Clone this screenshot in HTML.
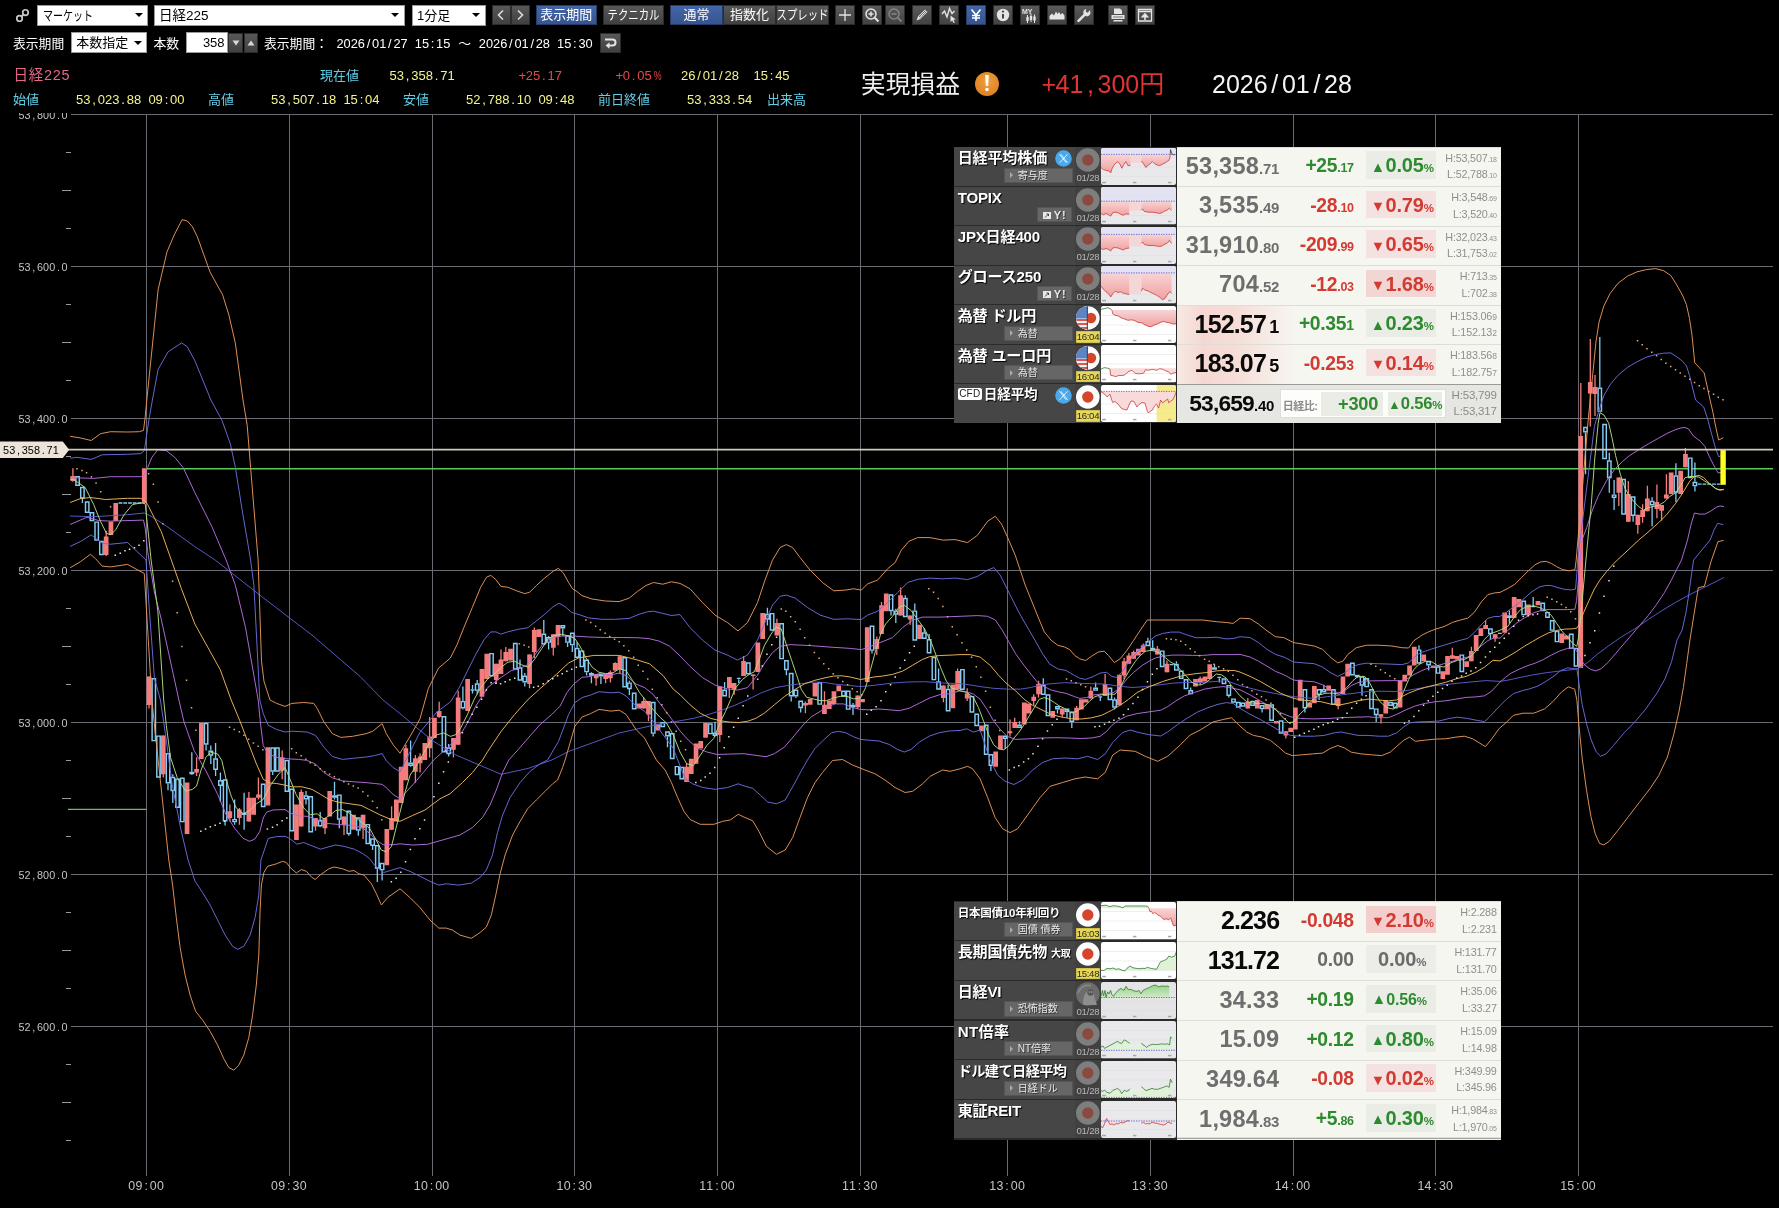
<!DOCTYPE html>
<html lang="ja"><head><meta charset="utf-8"><title>日経225 チャート</title>
<style>
html,body{margin:0;padding:0;background:#000;}
body{width:1779px;height:1208px;position:relative;overflow:hidden;font-family:"Liberation Sans","Noto Sans CJK JP",sans-serif;color:#fff;}
.abs{position:absolute;white-space:nowrap;}

.sel{position:absolute;background:#fff;border:1px solid #9a9a9a;box-sizing:border-box;color:#000;font-size:13px;line-height:19px;height:21px;padding-left:4.5px;white-space:nowrap;overflow:hidden;}
.sel i{position:absolute;right:4.5px;top:7.5px;width:0;height:0;border-left:4px solid transparent;border-right:4px solid transparent;border-top:4.5px solid #000;}
.btn{position:absolute;box-sizing:border-box;height:20px;top:5px;background:linear-gradient(#585858,#404040);border:1px solid #2c2c2c;color:#fff;font-size:13px;line-height:18px;text-align:center;white-space:nowrap;overflow:hidden;}
.btn.on{background:linear-gradient(#4466a8,#36548e);border-color:#263c68;}
.btn span{display:inline-block;}
.ib{position:absolute;box-sizing:border-box;width:20px;height:20px;top:5px;background:linear-gradient(#5a5a5a,#424242);border:1px solid #2c2c2c;}
.ib.on{background:linear-gradient(#4466a8,#36548e);border-color:#263c68;}
.ib svg{position:absolute;left:0;top:0;}
.nar{display:inline-block;transform:scaleX(.8);transform-origin:0 50%;}
.pp{display:inline-block;text-align:center;font-weight:normal;}
.t{position:absolute;white-space:nowrap;line-height:1;}
.cy{color:#62cce4;} .ye{color:#f4f48c;} .rd{color:#e84848;}


.pn{position:absolute;left:954.2px;width:546.8px;background:#2a2a2a;}
.row{position:absolute;left:0;width:546.5px;height:38.5px;}
.row .nm{position:absolute;left:0;top:0;width:121px;height:100%;background:#464646;}
.row .fl{position:absolute;left:121px;top:0;width:25.5px;height:100%;background:#414141;}
.row .mc{position:absolute;left:146.5px;top:0.6px;width:75.5px;height:37.3px;border-radius:2px;overflow:hidden;}
.row .lt{position:absolute;left:222.5px;top:-0.6px;width:324px;height:39.7px;background:#f6f6f1;border-top:1px solid #deded8;box-sizing:border-box;}
.row .lt.cfd{background:#e6e6e2;border-top:1.5px solid #9a9a96;}
.nmt{position:absolute;left:3.5px;top:2px;font-weight:bold;font-size:15.1px;line-height:18px;color:#fff;white-space:nowrap;text-shadow:1px 1px 1px #000;letter-spacing:-0.2px}
.sb{position:absolute;top:20.5px;height:15.3px;background:#666;border:1px solid #555;box-sizing:border-box;color:#e8e8e8;font-size:10px;line-height:14.4px;white-space:nowrap;text-shadow:1px 1px 0 #333;}
.sb:before{content:"";position:absolute;left:5px;top:3.6px;border-left:3.5px solid #aaa;border-top:3px solid transparent;border-bottom:3px solid transparent;}
.dt{position:absolute;left:0;width:25.5px;top:25px;text-align:center;font-size:9.6px;line-height:11px;color:#b8b8b8;letter-spacing:-0.2px}
.tm{position:absolute;left:1px;width:23.5px;top:26.3px;height:11.3px;background:#e6d65a;text-align:center;font-size:9.6px;line-height:11.6px;color:#2a2a1a;letter-spacing:-0.3px;box-shadow:inset 0 0 0 0.5px #b8a840}
.pr{position:absolute;right:221.5px;top:3.4px;font-weight:bold;font-size:23.5px;line-height:30px;color:#6e6e6e;white-space:nowrap;letter-spacing:0.2px}
.pr small{font-size:15px;letter-spacing:-0.2px}
.pr.lv{color:#0a0a0a;font-size:25px;letter-spacing:-0.85px}
.ch{position:absolute;right:147px;top:5.6px;font-weight:bold;font-size:19.3px;line-height:26px;white-space:nowrap;letter-spacing:-0.3px}
.ch small{font-size:12.5px}
.pc{position:absolute;left:189.5px;width:69.5px;top:3.6px;height:27.6px;box-sizing:border-box;font-weight:bold;font-size:20px;line-height:29.4px;text-align:right;padding-right:2px;white-space:nowrap;letter-spacing:-0.2px}
.pc small{font-size:11.5px}
.pc i{font-style:normal;font-size:14.5px;position:relative;top:-0.5px;margin-right:0.5px}
.up{color:#2e8a2e}.dn{color:#d23a32}.fl0{color:#6a6a6a}
.pc.up{background:#e9ede6}.pc.dn{background:#f3e2e0}.pc.fl0{background:#ecece8}
.hl{position:absolute;right:4px;top:3px;text-align:right;font-size:10.8px;line-height:15.8px;color:#8e8e8e;white-space:nowrap;letter-spacing:-0.2px}
.hl small{font-size:7px}
.glow{position:absolute;left:0;top:0;width:118px;height:100%;background:linear-gradient(90deg,rgba(246,186,180,.22) 0,rgba(246,186,180,.5) 22%,rgba(246,186,180,.42) 50%,rgba(246,186,180,0) 100%);}

</style></head><body><div id="root" style="position:absolute;left:0;top:0;width:1779px;height:1208px;will-change:transform">
<svg class="chart" width="1779" height="1095" viewBox="0 113 1779 1095" style="position:absolute;left:0;top:113px">
<path d="M70.5 114.6H1773M70.5 266.6H1773M70.5 418.6H1773M70.5 570.6H1773M70.5 722.5H1773M70.5 874.4H1773M70.5 1026.4H1773M146.8 114V1176M289.4 114V1176M432.1 114V1176M574.8 114V1176M717.5 114V1176M860.2 114V1176M1007.7 114V1176M1150.4 114V1176M1293.1 114V1176M1435.8 114V1176M1578.5 114V1176" stroke="#6a6a72" stroke-width="1" fill="none" shape-rendering="crispEdges"/>
<path d="M66 152.6H71M62 190.6H71M66 228.6H71M66 304.6H71M62 342.6H71M66 380.6H71M66 456.6H71M62 494.6H71M66 532.6H71M66 608.6H71M62 646.6H71M66 684.6H71M66 760.6H71M62 798.6H71M66 836.6H71M66 912.6H71M62 950.6H71M66 988.6H71M66 1064.6H71M62 1102.6H71M66 1140.6H71" stroke="#9a9a9a" stroke-width="1" fill="none" shape-rendering="crispEdges"/>
<g font-family="'Liberation Sans',sans-serif" fill="#c4c4c4">
<text x="21.5 27.6 33.8 39.9 46.1 52.2 58.4 64.5" y="118.7" font-size="10.8" text-anchor="middle">53,800.0</text>
<text x="21.5 27.6 33.8 39.9 46.1 52.2 58.4 64.5" y="270.7" font-size="10.8" text-anchor="middle">53,600.0</text>
<text x="21.5 27.6 33.8 39.9 46.1 52.2 58.4 64.5" y="422.7" font-size="10.8" text-anchor="middle">53,400.0</text>
<text x="21.5 27.6 33.8 39.9 46.1 52.2 58.4 64.5" y="574.7" font-size="10.8" text-anchor="middle">53,200.0</text>
<text x="21.5 27.6 33.8 39.9 46.1 52.2 58.4 64.5" y="726.6" font-size="10.8" text-anchor="middle">53,000.0</text>
<text x="21.5 27.6 33.8 39.9 46.1 52.2 58.4 64.5" y="878.5" font-size="10.8" text-anchor="middle">52,800.0</text>
<text x="21.5 27.6 33.8 39.9 46.1 52.2 58.4 64.5" y="1030.5" font-size="10.8" text-anchor="middle">52,600.0</text>
<text x="131.8 139 146.2 153.3 160.5" y="1190" font-size="12.4" text-anchor="middle">09:00</text>
<text x="274.5 281.7 288.8 296 303.1" y="1190" font-size="12.4" text-anchor="middle">09:30</text>
<text x="417.2 424.4 431.5 438.7 445.8" y="1190" font-size="12.4" text-anchor="middle">10:00</text>
<text x="559.9 567.1 574.2 581.4 588.5" y="1190" font-size="12.4" text-anchor="middle">10:30</text>
<text x="702.6 709.8 716.9 724.1 731.2" y="1190" font-size="12.4" text-anchor="middle">11:00</text>
<text x="845.4 852.5 859.6 866.8 873.9" y="1190" font-size="12.4" text-anchor="middle">11:30</text>
<text x="992.8 1000 1007.1 1014.2 1021.4" y="1190" font-size="12.4" text-anchor="middle">13:00</text>
<text x="1135.5 1142.7 1149.8 1157 1164.1" y="1190" font-size="12.4" text-anchor="middle">13:30</text>
<text x="1278.2 1285.3 1292.5 1299.7 1306.8" y="1190" font-size="12.4" text-anchor="middle">14:00</text>
<text x="1420.9 1428 1435.2 1442.4 1449.5" y="1190" font-size="12.4" text-anchor="middle">14:30</text>
<text x="1563.6 1570.8 1577.9 1585.1 1592.2" y="1190" font-size="12.4" text-anchor="middle">15:00</text>
</g>
<path d="M68 809.3H146.5" stroke="#58c858" stroke-width="1.2"/>
<path d="M146.7 468.7H1773" stroke="#58c858" stroke-width="1.4"/>
<path d="M72.9 468.3V481.8M106.2 530.7V556M149 676.4V708.4M163.3 735.4V777.6M196.6 757.3V775.9M229.9 804.6V821.4M239.4 807.9V824.8M248.9 791.9V821.4M258.4 777.6V799.5M282.2 750.6V779.3M301.2 789.4V826.5M315.5 818V830.7M325 818V834.1M344 816.4V834.9M363.1 814.7V839.1M391.6 806.2V829.8M405.9 744.8V780.2M415.4 754.9V782.7M420.1 753.2V772.6M429.6 717V757.4M439.2 701.8V717.8M453.4 738V757.4M458.2 690.8V744.8M496.2 663.8V684.1M501 649.5V674M505.8 647V661.3M529.5 654.6V688.3M534.3 627.6V657.9M553.3 634.3V655.4M558.1 625.1V645.3M596.1 674V685.8M605.6 674V683.2M610.4 670.6V682.4M615.2 662.2V670.6M619.9 655.4V674M643.7 697.6V708.5M648.5 700.9V721.2M686.5 763.3V781.9M719.8 686.2V741.9M729.3 677V698M734.1 682.9V694.7M743.6 655.9V676.1M753.1 674.4V689.6M776.9 618.8V635.6M805.4 701.4V713.2M824.5 691.3V714.1M857.7 695.5V709M876.8 636.5V655M881.5 601.9V634M900.6 587.6V615.4M910.1 615.4V624.7M943.4 685.4V702.3M957.6 668.5V689.6M967.2 688.3V700.9M1010 719.5V736.4M1014.7 717.8V727.9M1033.7 694.2V705.2M1038.5 680.7V697.6M1062.3 708.5V717M1076.6 706V720.3M1090.8 686.6V698.4M1105.1 674V695.9M1124.1 657.9V679M1128.9 652.9V663.8M1133.6 650.4V658.8M1143.2 643.6V652M1157.4 646.1V654.6M1166.9 660.5V672.3M1200.2 676.5V684.9M1247.8 698.3V708.4M1285.9 731.2V738.4M1338.2 698.3V709.2M1381 714.3V723.6M1452.3 647.7V658.7M1471.4 646.8V661.2M1485.6 619.9V629.1M1495.1 634.2V641.8M1580.8 383V668M1590.3 339V426.6M1595 375V416M1618.8 477.6V506M1628.3 481.1V521.7M1637.8 514.7V533.8M1642.6 504.3V522.8M1647.4 485.7V511.2M1656.9 484.6V518.2M1661.6 504.9V520.5M1666.4 474.2V498.5M1685.4 448.1V467.2" stroke="#f47c7c" stroke-width="1.3" fill="none"/>
<path d="M70.5 475.9h4.7V480.9h-4.7zM103.8 536.6h4.7V555.1h-4.7zM108.6 521.4h4.7V534.9h-4.7zM113.4 502.9h4.7V521.1h-4.7zM141.9 468.3h4.7V502.9h-4.7zM146.7 676.4h4.7V705h-4.7zM160.9 735.4h4.7V774.2h-4.7zM184.7 782.6h4.7V834.1h-4.7zM194.2 769.1h4.7V772.5h-4.7zM199 722.8h4.7V759h-4.7zM227.5 811.3h4.7V818h-4.7zM237 809.6h4.7V818h-4.7zM246.5 797.8h4.7V821.4h-4.7zM251.3 797.8h4.7V814.7h-4.7zM256.1 794.4h4.7V797.8h-4.7zM265.6 747.2h4.7V805.4h-4.7zM279.8 757.3h4.7V770.8h-4.7zM294.1 804.6h4.7V840h-4.7zM298.9 791.9h4.7V826.5h-4.7zM313.1 818h4.7V826.5h-4.7zM322.6 818h4.7V828.2h-4.7zM327.4 791.1h4.7V816.4h-4.7zM341.7 816.4h4.7V824.8h-4.7zM351.2 814.7h4.7V829.8h-4.7zM360.7 814.7h4.7V828.2h-4.7zM384.5 829h4.7V865.3h-4.7zM389.2 818h4.7V829.8h-4.7zM394 799.5h4.7V821.4h-4.7zM398.8 766.7h4.7V803h-4.7zM403.5 748.2h4.7V780.2h-4.7zM413 758.3h4.7V771.8h-4.7zM417.8 756.6h4.7V763.3h-4.7zM422.5 743.1h4.7V760h-4.7zM427.3 736.4h4.7V748.2h-4.7zM432.1 717.8h4.7V738h-4.7zM436.8 711.1h4.7V717h-4.7zM451.1 738h4.7V749.8h-4.7zM455.8 697.6h4.7V744.8h-4.7zM465.3 679h4.7V711.1h-4.7zM479.6 668.9h4.7V696.7h-4.7zM484.4 653.7h4.7V679h-4.7zM493.9 663.8h4.7V679.9h-4.7zM498.6 659.6h4.7V674h-4.7zM503.4 652h4.7V661.3h-4.7zM508.2 648.7h4.7V660.5h-4.7zM527.2 654.6h4.7V684.1h-4.7zM531.9 630.1h4.7V652h-4.7zM536.7 629.3h4.7V636.9h-4.7zM551 634.3h4.7V647.8h-4.7zM555.7 625.1h4.7V636.9h-4.7zM593.8 674h4.7V678.2h-4.7zM603.3 674h4.7V679h-4.7zM608 672.3h4.7V678.2h-4.7zM612.8 663h4.7V670.6h-4.7zM617.6 656.3h4.7V668.9h-4.7zM636.6 703.5h4.7V708.5h-4.7zM641.3 700.9h4.7V708.5h-4.7zM646.1 700.9h4.7V714.4h-4.7zM655.6 723.7h4.7V730.5h-4.7zM684.2 766.7h4.7V781.9h-4.7zM688.9 758.8h4.7V773.9h-4.7zM693.7 743.6h4.7V763.8h-4.7zM698.4 741h4.7V748.6h-4.7zM703.2 723h4.7V737.7h-4.7zM717.5 686.2h4.7V735.1h-4.7zM727 677h4.7V687.9h-4.7zM731.7 682.9h4.7V689.6h-4.7zM741.2 660.9h4.7V676.1h-4.7zM750.8 674.4h4.7V676.1h-4.7zM755.5 642.4h4.7V671.9h-4.7zM760.3 612.9h4.7V639h-4.7zM774.5 623h4.7V635.6h-4.7zM803.1 703.1h4.7V705.6h-4.7zM807.8 698.9h4.7V704.8h-4.7zM812.6 682.9h4.7V696.4h-4.7zM822.1 704.8h4.7V714.1h-4.7zM826.9 700.6h4.7V709h-4.7zM831.6 691.3h4.7V703.9h-4.7zM836.4 685.4h4.7V691.3h-4.7zM855.4 695.5h4.7V707.3h-4.7zM860.2 698.9h4.7V702.3h-4.7zM864.9 627.2h4.7V682h-4.7zM874.4 639h4.7V649.1h-4.7zM879.2 605.3h4.7V634h-4.7zM883.9 593.5h4.7V611.2h-4.7zM898.2 595.2h4.7V615.4h-4.7zM907.7 615.4h4.7V619.6h-4.7zM917.2 624.7h4.7V639h-4.7zM941 685.4h4.7V698h-4.7zM950.5 684.6h4.7V708.2h-4.7zM955.3 671.1h4.7V689.6h-4.7zM964.8 693.4h4.7V698.4h-4.7zM979.1 725.4h4.7V731.3h-4.7zM993.3 751.5h4.7V766.7h-4.7zM998.1 735.5h4.7V749h-4.7zM1007.6 731.3h4.7V733.3h-4.7zM1012.4 722h4.7V727.9h-4.7zM1021.9 702.6h4.7V724.6h-4.7zM1026.6 703.5h4.7V713.6h-4.7zM1031.4 696.7h4.7V700.9h-4.7zM1036.2 684.1h4.7V694.2h-4.7zM1050.4 711.1h4.7V717.8h-4.7zM1059.9 708.5h4.7V714.4h-4.7zM1074.2 707.7h4.7V720.3h-4.7zM1079 699.3h4.7V709.4h-4.7zM1083.7 699.3h4.7V702.6h-4.7zM1088.5 690.8h4.7V698.4h-4.7zM1102.7 684.1h4.7V695.9h-4.7zM1117 674.8h4.7V705.2h-4.7zM1121.8 661.3h4.7V675.6h-4.7zM1126.5 655.4h4.7V663.8h-4.7zM1131.3 652h4.7V658.8h-4.7zM1136 648.7h4.7V655.4h-4.7zM1140.8 645.3h4.7V652h-4.7zM1155.1 648.7h4.7V654.6h-4.7zM1164.6 663.8h4.7V672.3h-4.7zM1193.1 679h4.7V686.6h-4.7zM1197.9 678.2h4.7V682.4h-4.7zM1202.6 676.5h4.7V681.6h-4.7zM1207.4 664.2h4.7V679h-4.7zM1245.4 701.7h4.7V708.4h-4.7zM1255 700h4.7V708.4h-4.7zM1264.5 704.2h4.7V709.2h-4.7zM1274 721h4.7V723.6h-4.7zM1283.5 731.2h4.7V735.4h-4.7zM1288.3 727.8h4.7V732h-4.7zM1293 707.6h4.7V729.5h-4.7zM1297.8 679.7h4.7V700.8h-4.7zM1307.3 702.5h4.7V707.6h-4.7zM1312 686.1h4.7V703.3h-4.7zM1326.3 685.6h4.7V690.7h-4.7zM1335.8 698.3h4.7V705.9h-4.7zM1340.6 676.4h4.7V694.1h-4.7zM1345.3 663.7h4.7V676.4h-4.7zM1378.6 714.3h4.7V716.8h-4.7zM1383.4 700h4.7V713.5h-4.7zM1397.7 680.6h4.7V707.6h-4.7zM1402.4 674.7h4.7V681.4h-4.7zM1407.2 665.4h4.7V675.5h-4.7zM1411.9 646.8h4.7V665.4h-4.7zM1421.4 654.4h4.7V661.2h-4.7zM1431 665.4h4.7V667.9h-4.7zM1440.5 671.3h4.7V678.9h-4.7zM1445.2 656.1h4.7V674.7h-4.7zM1450 655.3h4.7V658.7h-4.7zM1454.7 656.1h4.7V659.5h-4.7zM1464.3 661.2h4.7V667.1h-4.7zM1469 651.1h4.7V661.2h-4.7zM1473.8 635h4.7V651.1h-4.7zM1478.5 628.3h4.7V635.9h-4.7zM1483.3 624.9h4.7V629.1h-4.7zM1492.8 634.2h4.7V638.4h-4.7zM1502.3 612.6h4.7V632.8h-4.7zM1511.8 597.1h4.7V618h-4.7zM1516.6 599.1h4.7V607.2h-4.7zM1526.1 604.5h4.7V615.3h-4.7zM1535.6 601.1h4.7V605.2h-4.7zM1559.4 633.5h4.7V643h-4.7zM1564.1 635.5h4.7V639.6h-4.7zM1578.4 436h4.7V668h-4.7zM1587.9 382h4.7V393.5h-4.7zM1592.7 387h4.7V394h-4.7zM1616.5 477.6h4.7V492.7h-4.7zM1626 493.9h4.7V521.7h-4.7zM1635.5 514.7h4.7V525.1h-4.7zM1640.3 510.1h4.7V517h-4.7zM1645 498.5h4.7V511.2h-4.7zM1654.5 502h4.7V508.9h-4.7zM1659.3 504.9h4.7V510.7h-4.7zM1664 494.4h4.7V498.5h-4.7zM1668.8 472.4h4.7V493.9h-4.7zM1678.3 470.7h4.7V493.9h-4.7zM1683.1 453.9h4.7V467.2h-4.7z" fill="#f47c7c"/>
<path d="M82.4 498.7V502.9M118.6 503H122.4M123.3 503H127.1M128.1 503H131.9M132.8 503H136.6M137.6 503H141.4M168 783.5V790.2M172.8 774.2V776.7M172.8 791.1V802.9M191.8 752.3V771.7M191.8 774.2V775M206.1 744.7V750.6M210.8 745.5V750.6M210.8 755.6V764.1M215.6 743V758.2M215.6 770V775.9M220.4 772.5V780.1M220.4 786V802M225.1 821.4V825.6M234.6 799.5V818.9M234.6 822.3V824.8M244.1 792.7V812.6M244.1 815V829.8M272.7 771.7V775M306 791.1V795.3M306 799.5V804.6M320.2 812.1V819.7M320.2 826.5V827.3M334.5 781.8V795.3M334.5 797.8V799.5M339.3 819.7V828.2M348.8 834.1V835.8M358.3 830.7V835.8M372.6 845.9V850.1M377.3 868.6V882.1M382.1 870.3V880.4M410.6 740.6V762.5M410.6 765.9V766.7M448.7 743.9V747.3M448.7 754.1V756.6M462.9 686.6V700.9M462.9 708.5V709.4M472.5 684.9V689.1M472.5 690.8V693.4M470.6 690H474.4M477.2 679.9V683.2M477.2 690.8V694.2M520 659.6V667.2M524.8 673.1V675.6M524.8 682.4V686.6M543.8 620V633.5M543.8 644.5V645.3M548.6 636V636.9M548.6 642.8V649.5M562.8 628.4V636M567.6 642.8V647M572.3 645.3V652M577.1 641.9V647.8M586.6 672.3V675.6M591.4 672.3V673.1M591.4 675.6V683.2M600.9 676.5V684.1M629.4 680.7V682.4M629.4 689.1V695M653.2 733.8V736.4M667.5 736.4V747.3M715 721.7V732.6M715 736V736.8M724.6 682V689.6M738.8 679.2V682.9M736.9 678.4H740.7M767.4 607.8V613.7M767.4 619.6V625.5M786.4 670.2V675.3M791.2 696.4V701.4M795.9 696.4V698M800.7 708.2V712.4M853 703.1V704.8M853 707.3V714.9M872 650.8V653.4M891 611.2V615.4M895.8 608.7V610.4M895.8 614.6V623M905.3 595.2V597.7M914.8 603.6V610.4M924.3 628.1V632.3M929.1 634V639M938.6 668.5V681.2M948.1 684.6V688.8M990.9 765.9V770.9M1005.2 738.9V749M1019.5 721.2V724.6M1043.3 678.2V684.9M1057.5 709.4V713.6M1067 711.9V717.8M1071.8 722V727.9M1095.6 682.4V687.5M1100.3 697.6V700.9M1098.4 696.8H1102.2M1114.6 697.6V699.3M1114.6 707.7V709.4M1147.9 637.7V641.1M1152.7 640.2V647.8M1169.8 664.6H1173.6M1176.4 661.3V663.8M1190.7 687.5V690M1214.5 664.2V667.2M1219.3 678.2V682.4M1217.4 677.4H1221.2M1228.8 695.9V697.6M1262.1 709.2V712.6M1304.9 708.4V712.6M1319.1 694.9V700M1323.9 684.8V689M1357.2 677.2V678M1362 685.6V695.8M1376.2 715.1V721.9M1419 645.2V649.4M1428.6 665.4V670.5M1490.4 634.2V639.3M1498 633.4H1501.8M1509.4 610.6V615.3M1509.4 618V623.4M1533.2 597.1V605.9M1531.3 606.5H1535.1M1585.5 432.4V474.2M1599.8 337V387.5M1609.3 452.7V460.3M1609.3 478.2V492.7M1614.1 480V494.4M1614.1 497.9V510.1M1633.1 515.9V521.7M1652.1 497.3V500.8M1652.1 505.4V526.3M1675.9 463.2V475.3M1675.9 492.7V502M1694.9 462.6V481.7M1694.9 486.3V491.5M1697.8 484.2H1701.6M1702.5 484.2H1706.3M1707.3 484.2H1711.1M1712.1 484.2H1715.9M1716.8 484.2H1720.6" stroke="#84ccf4" stroke-width="1.3" fill="none"/>
<path d="M75.9 476.6h3.4V485.3h-3.4zM80.7 487.5h3.4V498h-3.4zM85.5 501.9h3.4V512.3h-3.4zM90.2 512.8h3.4V520.4h-3.4zM95 522.1h3.4V540.1h-3.4zM99.7 541.5h3.4V554.4h-3.4zM152.1 678.7h3.4V740.6h-3.4zM156.8 736.1h3.4V776.9h-3.4zM166.3 753.8h3.4V782.8h-3.4zM171.1 777.4h3.4V790.4h-3.4zM175.8 779.1h3.4V807.2h-3.4zM180.6 778.3h3.4V821.6h-3.4zM190.1 772.4h3.4V773.5h-3.4zM204.4 723.5h3.4V744h-3.4zM209.1 751.3h3.4V754.9h-3.4zM213.9 758.9h3.4V769.3h-3.4zM218.7 780.8h3.4V785.3h-3.4zM223.4 780h3.4V820.7h-3.4zM232.9 819.6h3.4V821.6h-3.4zM242.4 813.3h3.4V814.3h-3.4zM261.5 784.2h3.4V806.4h-3.4zM271 747.9h3.4V771h-3.4zM275.7 747.9h3.4V771h-3.4zM285.2 760.6h3.4V791.2h-3.4zM290 789.2h3.4V830.8h-3.4zM304.3 796h3.4V798.8h-3.4zM309 796.8h3.4V831.7h-3.4zM318.5 820.4h3.4V825.8h-3.4zM332.8 796h3.4V797.1h-3.4zM337.6 795.1h3.4V819h-3.4zM347.1 811.2h3.4V833.4h-3.4zM356.6 817.9h3.4V830h-3.4zM366.1 824.6h3.4V843.5h-3.4zM370.9 839h3.4V845.2h-3.4zM375.6 845.7h3.4V867.9h-3.4zM380.4 863.4h3.4V869.6h-3.4zM408.9 763.2h3.4V765.2h-3.4zM442.2 716.8h3.4V751.7h-3.4zM447 748h3.4V753.4h-3.4zM461.2 701.6h3.4V707.8h-3.4zM475.5 683.9h3.4V690.1h-3.4zM489.8 653.6h3.4V675.8h-3.4zM513.6 643.5h3.4V669h-3.4zM518.3 667.9h3.4V680h-3.4zM523.1 676.3h3.4V681.7h-3.4zM542.1 634.2h3.4V643.8h-3.4zM546.9 637.6h3.4V642.1h-3.4zM561.1 625.8h3.4V627.7h-3.4zM565.9 635.9h3.4V642.1h-3.4zM570.6 633.3h3.4V644.6h-3.4zM575.4 648.5h3.4V657.2h-3.4zM580.2 651.1h3.4V666.5h-3.4zM584.9 660.3h3.4V671.6h-3.4zM589.7 673.8h3.4V674.9h-3.4zM599.2 674.7h3.4V675.8h-3.4zM623 657.8h3.4V686.8h-3.4zM627.7 683.1h3.4V688.4h-3.4zM632.5 693.2h3.4V708.7h-3.4zM651.5 702.5h3.4V733.1h-3.4zM661 722.7h3.4V726.4h-3.4zM665.8 732h3.4V735.7h-3.4zM670.5 733.7h3.4V758.4h-3.4zM675.3 766.6h3.4V774.4h-3.4zM680.1 767.4h3.4V778.7h-3.4zM708.6 724h3.4V733.6h-3.4zM713.3 733.3h3.4V735.3h-3.4zM722.9 690.3h3.4V695.7h-3.4zM746.6 663h3.4V673.7h-3.4zM765.7 614.4h3.4V618.9h-3.4zM770.4 613.6h3.4V629.9h-3.4zM779.9 623.7h3.4V658.6h-3.4zM784.7 660.8h3.4V669.5h-3.4zM789.5 673.4h3.4V695.7h-3.4zM794.2 690.3h3.4V695.7h-3.4zM799 701.3h3.4V707.5h-3.4zM818 682.7h3.4V704.1h-3.4zM841.8 691.2h3.4V695.7h-3.4zM846.5 691.2h3.4V709.1h-3.4zM851.3 705.5h3.4V706.6h-3.4zM870.3 626.2h3.4V650.1h-3.4zM889.3 595h3.4V610.5h-3.4zM894.1 611.1h3.4V613.9h-3.4zM903.6 598.4h3.4V616.4h-3.4zM913.1 611.1h3.4V640h-3.4zM922.6 633h3.4V638.3h-3.4zM927.4 639.7h3.4V652.7h-3.4zM932.2 657.4h3.4V679.6h-3.4zM936.9 681.9h3.4V688.9h-3.4zM946.4 689.5h3.4V710.8h-3.4zM960.7 669.6h3.4V689.3h-3.4zM970.2 696.6h3.4V712h-3.4zM975 714.3h3.4V725.5h-3.4zM984.5 725.3h3.4V754.2h-3.4zM989.2 754.8h3.4V765.2h-3.4zM1003.5 736.2h3.4V738.2h-3.4zM1017.8 725.3h3.4V727.2h-3.4zM1041.6 685.6h3.4V694.3h-3.4zM1046.3 694.9h3.4V715.4h-3.4zM1055.8 706.7h3.4V708.7h-3.4zM1065.3 709.2h3.4V711.2h-3.4zM1070.1 712.6h3.4V721.3h-3.4zM1093.9 688.2h3.4V690.1h-3.4zM1108.2 688.2h3.4V699.4h-3.4zM1112.9 700h3.4V707h-3.4zM1146.2 641.8h3.4V645.4h-3.4zM1151 648.5h3.4V649.7h-3.4zM1160.5 651.1h3.4V666.5h-3.4zM1174.7 664.5h3.4V669.9h-3.4zM1179.5 671.3h3.4V678.3h-3.4zM1184.3 679.7h3.4V688.4h-3.4zM1189 690.7h3.4V693.5h-3.4zM1212.8 667.9h3.4V669h-3.4zM1222.3 678.9h3.4V683.4h-3.4zM1227.1 685.6h3.4V695.2h-3.4zM1231.8 699.1h3.4V701.9h-3.4zM1236.6 702.5h3.4V707h-3.4zM1241.3 703.2h3.4V706h-3.4zM1250.9 701.5h3.4V705.2h-3.4zM1260.4 705.7h3.4V708.5h-3.4zM1269.9 704.9h3.4V720.3h-3.4zM1279.4 720.9h3.4V733h-3.4zM1303.2 689.7h3.4V707.7h-3.4zM1317.4 689.7h3.4V694.2h-3.4zM1322.2 689.7h3.4V691.7h-3.4zM1331.7 689.7h3.4V704.3h-3.4zM1350.7 663.2h3.4V674.8h-3.4zM1355.5 675.4h3.4V676.5h-3.4zM1360.3 677.1h3.4V684.9h-3.4zM1365 678.7h3.4V686.6h-3.4zM1369.8 689.7h3.4V708.5h-3.4zM1374.5 709.1h3.4V714.4h-3.4zM1388.8 702.4h3.4V705.2h-3.4zM1393.6 703.2h3.4V707.7h-3.4zM1417.3 650.1h3.4V663h-3.4zM1426.9 661.5h3.4V664.7h-3.4zM1436.4 666.9h3.4V673.1h-3.4zM1460.1 655.1h3.4V671.4h-3.4zM1488.7 629h3.4V633.5h-3.4zM1507.7 616h3.4V617.3h-3.4zM1522 601.2h3.4V614.6h-3.4zM1541 603.2h3.4V610.6h-3.4zM1545.8 612.6h3.4V617.3h-3.4zM1550.5 620.7h3.4V630.1h-3.4zM1555.3 631.5h3.4V641.6h-3.4zM1569.6 634.2h3.4V648.3h-3.4zM1574.3 648.4h3.4V665.9h-3.4zM1583.8 427.4h3.4V431.7h-3.4zM1598.1 388.2h3.4V411.1h-3.4zM1602.9 424.5h3.4V458.4h-3.4zM1607.6 461h3.4V477.5h-3.4zM1612.4 495.1h3.4V497.2h-3.4zM1621.9 479.5h3.4V514h-3.4zM1631.4 496.9h3.4V515.2h-3.4zM1650.4 501.5h3.4V504.7h-3.4zM1674.2 476h3.4V492h-3.4zM1688.5 458.1h3.4V477.5h-3.4zM1693.2 482.4h3.4V485.6h-3.4z" stroke="#84ccf4" stroke-width="1.45" fill="#000"/>
<path d="M70.1 516 93.7 516.7 127.5 514.7 144.3 513 151.1 516.4 164.6 524.8 194.9 546.7 215.1 560 262.4 597.1 313 635.9 360 676.4 383 700 400 713.6 416.9 727.9 433.7 741.4 455.6 754.9 479.3 765 501.2 774.3 528.2 768.4 551.8 760 568.6 751.5 593.9 742.3 619.2 733 653 725.4 680 720.8 693.5 718.3 707 714.9 720.5 710.7 734 705.6 747.5 699.7 760.9 693 774.4 687.9 787.9 685.4 801.4 683.7 814.9 682 825 682.5 835.1 684.2 848.6 685.4 860.4 686.6 873.9 685.4 890.8 683.2 907.7 682 924.5 681.7 941.4 682.9 960 683.7 970.1 684.9 980.2 686.6 993.7 688.3 1007.2 689.1 1020.7 689.1 1030.8 687.5 1040.9 684.9 1051.1 683.7 1064.6 682.7 1078 683.2 1091.5 683.7 1105 684.1 1118.5 686.1 1132 687.5 1145.5 686.6 1159 684.9 1172.5 683.2 1186 682.4 1199.5 682.7 1213 681.6 1226.4 680.7 1240 685.6 1250.1 688.2 1260.2 690.7 1273.7 693.2 1287.2 695.8 1300.7 697.4 1314.2 698.3 1327.7 696.6 1341.2 694.9 1354.7 693.2 1368.2 691.5 1381.7 691.2 1395.1 691.5 1405.3 690.7 1415.4 689 1425.5 687.3 1435.6 685.6 1445.7 684.5 1459.2 683.1 1472.7 681.8 1486.2 680.6 1500 681.4 1508.1 680.1 1520.2 677.4 1533.7 674.7 1547.2 672.6 1560.7 670.9 1574.2 669.5 1580.9 667.3 1587.7 662.5 1597.1 654.4 1607.9 646.3 1621.4 636.9 1634.9 628.8 1648.4 619.4 1661.9 610.6 1675.4 602.5 1688.9 595.1 1702.4 588.3 1715.9 581.6 1723.9 577.5" stroke="#5c5cd0" stroke-width="0.95" fill="none" stroke-linejoin="round"/>
<path d="M70.1 436.3 80.2 437.9 91.2 440.5 100.5 433.7 110.6 431.7 127.5 432 139.3 431.7 143.5 430.4 145.2 416.9 146.8 400 158.1 289.7 167 251.8 174.6 234.1 182.1 219.7 187.2 220.9 192.3 226.5 197.3 236.6 210 272 222.6 294.8 228.9 315 235.3 342.9 243 400 247.2 425.3 250.6 467.5 258.1 560 259.8 610.6 261.5 661.2 264 681.4 270 700 276.7 703.4 285.1 706.4 291.9 703.4 303.7 702.5 313.8 703.4 317.2 708.4 323.9 721.9 332.4 733.7 340.8 737.4 352.6 736.3 366.1 733.7 372.8 731.2 382.1 723.6 386.3 733.7 393.1 744.7 400 753.2 410.1 736.4 420 718.8 428.4 688.4 438.5 668.2 450.4 658 457.1 644.6 463.8 627.7 472.3 607.5 480.7 587.2 486.6 577.1 490.8 575.4 495.9 579.6 500.9 586.4 507.7 587.2 516.1 590.6 524.6 593.6 529.6 592.3 536.4 585.5 544.8 577.9 553.2 571.2 558.3 568.3 563.3 572.9 568.4 582.2 572.6 588.9 576.8 591.4 581.9 595.6 592 599 605.5 601 619 601.6 629.1 598.2 637.5 591.4 646 585.5 653.6 582.5 662.8 584.2 671.3 581.8 680 583.4 690 588.8 702.5 602.6 715 615.1 727.5 622.6 738 630.9 747.5 622.6 757.5 602.6 765 580.1 772.5 560.1 780 547.6 786.3 544.6 792.6 547.6 800.1 557.6 810.1 570.1 822.6 582.6 833.8 590.8 845.1 590.1 853.8 588.8 861.3 590.1 867.6 583.8 877.6 580.1 887.6 568.8 895.1 562.6 901.4 550.1 908.9 541.3 917.6 537.6 930.1 537.6 942.6 540.1 955.1 539.6 967.6 542.6 977.6 535.1 987.6 521.3 995.2 516.3 1001.4 523.8 1007.7 537.6 1015.2 555.1 1025.2 585.1 1039.3 620 1044.3 631.8 1051.1 640.2 1057.8 645.3 1064.6 647 1069.6 649.5 1074.7 655.4 1079.7 658.8 1085.6 660.5 1091.5 656.3 1098.3 652 1104.2 651.2 1108.4 655.4 1114.3 662.5 1120.2 658.8 1126.9 650.4 1133.7 640.2 1140.4 630.1 1147.2 620 1202.8 620 1216.3 621.7 1226.4 622.5 1233.2 623.4 1240 618.2 1250.1 618.7 1258.5 624.1 1267 630.8 1275.4 636.7 1283.8 637.6 1293.6 642.6 1304.1 644.3 1314.2 646 1322.6 649.4 1331.1 657.8 1337.8 662.9 1342.9 661.2 1347.9 654.4 1356.4 647.7 1366.5 645.2 1378.3 645.2 1391.8 646 1401.9 647.7 1408.6 648 1413.7 640.9 1422.1 635 1428.9 631.7 1435.6 629.1 1444 626.6 1452.5 622.4 1460.9 619.9 1467.7 618.2 1474.4 612.3 1481.1 602.2 1487.9 594.6 1494.6 592.9 1500 592.4 1508.1 588.3 1514.8 584.3 1521.6 577.5 1528.3 570.8 1535.1 564.7 1540.5 562 1545.9 561.3 1551.3 563.4 1556.7 566.7 1562.1 569.4 1568.8 570.8 1574.9 569.7 1576.2 560 1588.1 420.9 1590.4 397.3 1592.8 373.7 1595.9 342.2 1599.1 321.8 1603.8 306.1 1610.1 293.5 1618 283.3 1627.4 276.2 1636.8 271.9 1646.3 269.6 1655.7 268.6 1663.6 270.7 1670.7 275.4 1676.2 284 1682.4 295 1686.4 304.5 1689.5 318.6 1691.9 334.4 1693.8 353.2 1694.7 362.7 1704.2 372.9 1710.1 400 1713 412.7 1715.9 427.8 1718.7 440 1723.4 437.7" stroke="#e8965a" stroke-width="0.95" fill="none" stroke-linejoin="round"/>
<path d="M70.1 567.8 80.2 561.9 90.4 554.3 95.4 558.5 102.2 566.1 110.6 566.9 127.5 564.4 144.3 573.5 151.9 700 155.3 733.7 160.4 780.9 168.8 860 172.6 885 176.3 917.5 180.1 947.5 185.1 975.1 190.1 995.1 195.6 1011.3 202.6 1020.1 210.1 1031.3 217.6 1045.1 223.8 1058.8 228.8 1067.6 233.8 1070.1 238.8 1065.1 243.8 1055.1 248.8 1037.6 252.6 1015.1 256.3 985.1 258.8 955 260.1 910 261.4 885 263.9 872.5 267.6 866.3 276.4 863.8 282.6 861.3 286.4 862.5 290.1 867.5 296.4 873 301.4 869.5 306.4 871.3 311.4 877 315.1 879.5 320.1 875 328.9 868.8 333.9 867 342.6 868.8 348.9 871.3 353.9 870.5 358.9 873.8 363.9 875 371.4 883.8 376.4 893.8 381.4 905 387.7 897.5 400 888.8 410 897.6 420 907.6 430 920.1 438.8 928.1 446.3 928.1 452.5 930.1 460 935.1 471.3 938.3 480 932.6 486.3 927.1 491.3 915.1 496.3 892.6 500.1 873.8 505.1 855 512.6 835 520.1 821.3 527.6 808.8 536.3 800 545.1 791.3 552.6 783.8 557.6 780 562.6 767.5 565.1 760 574.9 726.2 582.1 717 590.6 713.6 599 709.4 610.8 711.1 619.2 710.2 626 714.4 636.1 729.6 644.5 738 656.4 760 665.1 770 671.4 782.5 677.6 797.5 683.9 811.3 690.1 819.5 700.2 824.3 713.9 824.3 722.7 821.3 730.2 820 738.2 814.3 743.9 817 752.7 820.8 758.9 831.3 766.4 846.3 776.4 854.3 785.2 850 792.7 837.5 800 817.5 807.5 797.5 815 782.5 822.5 772.5 832.5 760.5 842.5 759.5 852.5 765 865 770 875 773.8 885 780 895 787.5 905.1 792.5 912.6 791.3 922.6 783.8 930.1 776.3 942.6 770 950.1 771.3 960.1 768.8 967.6 766.3 972.6 768.8 980.1 778.8 987.6 797.5 995.1 817.5 1002.6 828.8 1010.1 832.6 1017.6 828.8 1027.6 815 1040.1 797.5 1050.1 786.3 1062.6 782.5 1075.1 778.8 1085.1 777 1097.6 778.8 1105.2 772.5 1112.7 755 1120.2 750 1135.2 751.3 1145.2 756.3 1157.7 761.3 1167.7 756.3 1180.2 745 1190.2 735 1200.2 730 1213 722 1223.1 719.5 1231.5 717.8 1240 726.1 1246.7 732 1253.5 735.4 1261.9 737.1 1270.4 740.4 1278.8 747.2 1285.5 753.1 1292.3 755.6 1302.4 754.8 1312.5 753.9 1322.6 753.1 1329.4 748.9 1337.8 745.5 1344.6 748 1351.3 752.2 1361.4 753.9 1371.5 754.8 1381.7 755.6 1390.1 752.2 1396.8 746.3 1403.6 740.4 1409.5 737.1 1415.4 741.3 1425.5 740.1 1435.6 739.1 1445.7 738.8 1455.9 737.1 1464.3 736.2 1472.7 738.8 1480 743.3 1485.4 746.6 1490.8 740.1 1499.4 728.3 1505.8 722.9 1513.4 715.3 1523.1 713.2 1533.8 713.2 1544.6 708.9 1553.2 701.3 1561.8 691.7 1568.3 686.9 1574.7 689.1 1576.9 700.3 1579 726.1 1582.2 758.4 1586.6 790.7 1590.9 816.5 1595.2 833.7 1599.5 843.4 1603.8 844.9 1609.2 841.3 1617.8 830.5 1628.5 816.5 1639.3 802.5 1650.1 788.5 1658.7 775.6 1667.3 757.3 1673.7 734.7 1679.1 711 1683.4 687.4 1686.7 663.7 1689.9 640 1698.3 587.7 1704.4 586.3 1711 561.5 1718 541.6 1723.6 540.4" stroke="#e8965a" stroke-width="0.95" fill="none" stroke-linejoin="round"/>
<path d="M70.1 458.2 76.9 457.3 91.2 459.4 102.2 454.8 127.5 454.3 140.9 453.6 144.3 450.6 146.8 433.7 149.4 416.9 152.4 400 158.1 369.4 168.2 351.7 181.6 342.9 187.2 346.6 194.8 360.6 210.9 400 221.9 420.2 230.3 443.8 235.4 467.5 242.1 509.6 250.6 560 253.9 585.3 259.8 700 263.2 713.5 268.3 725.3 276.7 729.5 285.1 732 291.9 731.2 307.1 732 315.5 735.4 323.9 747.2 332.4 756.5 342.5 759.4 354.3 758.2 366.1 757 374.5 755.6 382.1 753.6 386.3 760.7 393.1 767.5 400 771.8 420 732.2 436.9 712 450.4 701.9 458.8 688.4 467.2 671.5 475.6 654.7 484.1 639.5 490.8 631.9 495.9 631.9 500.9 634.1 507.7 631.9 517.8 629.4 527.9 627.7 536.4 620.9 544.8 614.2 553.2 606.6 559.1 603.2 565 606.6 571.8 612.5 580.2 615 588.6 617.9 602.1 619.3 615.6 619.3 629.1 618.4 639.2 614.2 647.7 611.7 653.6 611.2 662.8 613.4 671.3 615.5 680 614.6 690 627.6 702.5 640.1 715 650.1 727.5 655.1 737.5 660.1 747.5 655.1 757.5 640.1 765 622.6 772.5 605.1 780 596.3 786.3 595.1 795.1 598.1 807.6 607.6 820.1 615.1 833.8 619.3 847.6 618.8 861.3 619.6 867.6 615.1 877.6 611.3 887.6 602.6 897.6 592.6 907.6 582.6 917.6 579.3 930.1 578.1 942.6 578.8 955.1 578.1 967.6 579.6 977.6 576.3 987.6 570.1 993.9 567.6 1000.2 575.1 1007.7 590.1 1017.7 610.1 1023.2 620 1029.1 630.1 1035.9 641.9 1042.6 653.7 1049.4 663.8 1057.8 668.9 1066.2 670.6 1074.7 675.6 1079.7 678.2 1085.6 679.4 1093.2 676.5 1100 673.1 1106.7 672.3 1111.8 676.5 1116.8 677.3 1121.9 672.3 1128.6 662.2 1135.4 653.7 1142.1 647 1148.9 641.1 1155.6 636 1162.4 633.5 1170.8 632.1 1179.2 632.1 1187.7 635.2 1196.1 637.7 1206.2 637.7 1216.3 637.2 1226.4 638.9 1233.2 638.5 1240 636.7 1250.1 637.6 1258.5 642.6 1267 649.4 1275.4 654.4 1283.8 657 1293.6 662 1304.1 662.9 1314.2 663.7 1322.6 667.1 1331.1 673 1337.8 676.4 1344.6 673 1351.3 667.9 1358 664.6 1366.5 663.2 1378.3 663.7 1391.8 664.2 1401.9 664.6 1408.6 662.9 1413.7 657.8 1420.4 652.7 1425.5 651.1 1435.6 647.7 1444 645.2 1452.5 642.6 1460.9 640.1 1467.7 638.4 1474.4 632.5 1481.1 624.9 1487.9 618.2 1494.6 616.5 1499.7 616.5 1506.4 612.3 1513.2 607.2 1519.9 602.2 1531 592.4 1539.1 587 1545.9 585.4 1551.3 585.6 1558 587.7 1564.8 589.4 1571.5 589.9 1575.5 589 1576.9 573.5 1577.6 560 1594.4 426.5 1599.1 409.9 1603.8 395.7 1610.1 384.7 1618 375.3 1627.4 367.4 1636.8 361.9 1646.3 357.2 1655.7 354.5 1663.6 353.2 1670.7 352.9 1676.2 356.4 1682.4 361.1 1686.4 365.8 1689.5 375.3 1695.6 400 1703.7 407 1707.2 417.4 1711.8 434.8 1715.3 447.5 1718.7 456.8 1723.4 454.5" stroke="#6c6cdc" stroke-width="0.95" fill="none" stroke-linejoin="round"/>
<path d="M70.1 546.4 80.2 541.7 91.2 534.9 102.2 543.3 110.6 544.2 127.5 542.5 146 560 149.4 610.6 154.4 678 160.4 700 165.4 733.7 172.2 784.3 180.6 828.2 188.1 860 195.1 881.3 202.6 892.5 210.1 905 217.6 920 225.1 935 232.6 946.3 237.6 949.3 243.8 946.3 250.1 935 255.1 917.5 258.8 895 260.9 860 268.3 838.3 276.7 836.6 285.1 836.3 289.4 838.3 296.9 844.2 303.7 842.5 312.1 845.9 320.6 849.2 329 846.7 335.7 845 344.2 846.4 354.3 849.2 362.7 853.5 369.5 858.5 374.5 865.3 383.9 872.5 400 867.6 410 871.3 420 876.3 430 881.3 438.8 885.1 446.3 883.8 458.8 885.1 471.3 883.1 480 877.6 486.3 870.1 492.5 855 497.5 832.5 502.6 815 510.1 797.5 520.1 782.5 530.1 771.3 540.1 763.8 547.6 760 558.5 741.4 563.6 727.9 568.6 714.4 574.9 702.6 582.1 697.6 590.6 695 599 691.7 610.8 692.8 619.2 692.2 626 695.9 636.1 706 644.5 711.1 653 721.2 663.1 734.7 673.2 748.2 685.1 778.8 692.6 783.8 702.7 787.5 715.2 789.3 727.7 787.5 738.2 783.8 745.2 786.3 752.7 788.3 760.2 795 767.7 802 776.4 803.8 785.2 800 796.4 780 801.4 770.6 808.2 758.8 814.9 748.6 823.3 740.2 831.8 732.6 838.5 731.4 845.3 732.6 853.7 736.8 860.4 739.4 868.9 740.2 879 741 889.1 744.4 897.5 749.5 904.3 752 911 749.5 919.5 741.9 929.6 736 939.7 732.6 949.8 730.9 960 730.5 966.7 728.8 973.5 732.1 980.1 730 985.1 745 990.1 760 997.6 775 1005.1 781.3 1013.9 784.5 1022.6 780 1032.6 770 1042.6 762.5 1052.6 758.8 1065.1 758 1077.6 758.8 1087.6 756.3 1097.6 759.5 1105.2 753.8 1112.7 742.5 1122.7 732.5 1130.2 730 1137.1 732.1 1148.9 734.7 1160.7 736 1167.4 732.1 1177.5 724.6 1187.7 717.8 1197.8 711.9 1207.9 707.7 1218 704.3 1226.4 702.6 1233.2 703.5 1240 708.4 1250.1 714.3 1260.2 719.4 1270.4 725.3 1280.5 731.2 1290.6 735.4 1300.7 736.2 1314.2 736.2 1324.3 735.4 1334.4 732.8 1341.2 732 1349.6 733.7 1358 735.4 1368.2 735.4 1378.3 736.2 1388.4 736.2 1396.8 732.8 1403.6 726.9 1410.3 722.7 1418.8 721.9 1428.9 721.6 1439 721 1449.1 718.5 1457.5 717.2 1467.7 718.5 1476.1 720.2 1484.5 721.6 1489.6 716.8 1500 705.7 1506.7 699 1513.5 693.6 1521.6 690.9 1529.7 688.8 1537.8 686.1 1545.9 681.4 1554 676 1560.7 670.6 1567.5 667.9 1576.9 669.1 1579 683.1 1582.2 704.6 1586.6 724 1590.9 739 1596.2 751.9 1600.5 756.2 1605.9 754.1 1613.5 745.5 1624.2 732.6 1635 721.8 1645.8 708.9 1656.5 693.8 1665.1 678.7 1671.6 661.5 1677 640 1682.1 630.2 1686.2 611.3 1688.9 593.7 1691.6 573.5 1693.6 560 1710.1 540 1714.1 529.8 1717.6 523.4 1723.4 524.6" stroke="#6c6cdc" stroke-width="0.95" fill="none" stroke-linejoin="round"/>
<path d="M70.1 477.6 93.7 478.4 110.6 476.7 140.9 476.7 144.3 475 147.7 467.5 151.9 457.3 157.8 449.7 166.2 450.6 174.7 457.3 183.1 467.5 194.9 492.7 211.8 526.5 226.1 560 235.4 585.3 245.5 627.5 258.2 700 260.7 725.3 263.2 745.5 268.3 754 276.7 757.3 285.1 758.7 298.6 759.4 307.1 760.4 315.5 764.1 323.9 772.5 332.4 777.9 342.5 780.9 354.3 781.8 366.1 782.6 374.5 783.5 382.1 784.3 386.3 787.7 393.1 794.4 400 798.8 416.9 780.2 433.7 760 450.6 744.8 462.4 731.3 467.5 722.9 475.9 706 487.7 687.5 501.2 677.3 511.3 670.6 518 668.9 526.5 665.5 533.2 657.1 543.3 643.6 551.8 637.7 561.9 636 574.6 636.1 588.6 637 605.5 637.5 622.4 637.5 639.2 637.8 649.3 638.7 659.5 641.2 669.6 646.2 680 655.9 690 666.4 702.5 677.6 715 685.1 727.5 688.9 737.5 690.1 747.5 687.6 757.5 675.1 765 662.6 772.5 652.6 780 646.4 790.1 644.6 810.1 645.6 830.1 647.1 850.1 648.4 861.3 649.6 867.6 647.6 880.1 642.6 892.6 637.6 902.6 627.6 912.6 620.1 922.6 617.1 940.1 617.1 960.1 616.3 977.6 615.6 987.6 616.3 995.4 620 1002.2 630.1 1008.9 641.9 1015.6 653.7 1024.1 665.5 1030.8 674 1037.6 682.4 1044.3 686.6 1051.1 690 1057.8 691.7 1066.2 693.4 1074.7 696.7 1079.7 698.4 1086.5 697.6 1093.2 695 1100 694.2 1106.7 693.4 1113.5 692.5 1120.2 687.5 1126.9 679 1133.7 672.3 1142.1 665.5 1148.9 661.3 1155.6 657.9 1162.4 656.3 1172.5 655.1 1182.6 655.1 1192.7 655.4 1202.8 655.4 1213 654.6 1223.1 654.6 1233.2 654.6 1240 654.4 1250.1 657 1258.5 661.2 1267 666.2 1275.4 671.3 1283.8 674.7 1293.6 680.1 1304.1 681.1 1314.2 681.8 1322.6 684.8 1331.1 689.8 1337.8 692.9 1344.6 690.7 1351.3 685.6 1358 682.6 1368.2 680.9 1385 680.7 1401.9 680.6 1408.6 678 1413.7 674.7 1420.4 671.3 1425.5 669.1 1435.6 666.2 1444 663.7 1452.5 661.2 1460.9 658.7 1467.7 657 1474.4 652.4 1481.1 646 1487.9 640.6 1494.6 637.6 1500 638.2 1508.1 630.2 1516.2 623.4 1524.3 618 1532.4 613.3 1540.5 610.6 1545.9 609.6 1554 609.6 1567.5 609.6 1574.9 609.2 1576.6 600.5 1582 540 1586.7 527.5 1592.4 510.1 1598.2 496.2 1606.3 481.1 1614.5 469.5 1622.6 461.4 1629.5 455.6 1638.8 449.8 1648.1 444 1658.5 438.2 1667.8 433 1675.9 429.5 1681.7 427.8 1685.1 427.5 1688.6 429 1693.3 435.9 1700.2 441.1 1704.8 446.3 1709.5 456.8 1714.1 466 1718.2 473 1723.4 471.8" stroke="#b46ee0" stroke-width="0.95" fill="none" stroke-linejoin="round"/>
<path d="M70.1 524.5 87 517.2 98.8 520.6 110.6 521.1 143.5 520.1 145.2 528.2 147.7 551.8 154.4 592 161.2 619 178.9 700 184 721.9 194.1 750.6 205.9 770.8 217.7 794.4 226.1 814.7 234.6 828.2 243 838.3 249.7 841.3 254.8 839.1 259.8 831.5 263.2 818 266.6 812.1 273.3 809.9 285.1 809.6 289.4 812.6 296.9 815.5 307.1 816.4 315.5 818.9 323.9 823.1 332.4 823.9 342.5 824.8 354.3 825.6 362.7 828.2 369.5 833.2 376.2 840 383 844.7 393.1 844.7 400 843.8 412.5 845 427.5 844.3 442.5 840 460 835 472.5 827.5 482.5 817.5 490 805 496.3 790 502.6 772.5 508.8 760 518 749.8 528.2 738 540 724.6 551.8 714.4 560.2 706 566.9 692.5 573.7 684.1 582.1 677.3 590.6 676.5 599 673.6 610.8 674.8 619.2 673.1 626 675.6 636.1 684.1 644.5 687.5 653 694.2 663.1 707.7 673.2 721.2 680 730.9 688.4 740.2 696.9 747.8 707 752 717.1 754.5 730.6 754 744.1 753.7 755.9 755.4 766 756.7 774.4 753.7 784.6 746.9 794.7 735.1 803.1 725 811.5 716.6 820 711.5 828.4 706.5 835.1 703.9 843.6 703.9 852 707.3 860.4 709.5 868.9 709.8 879 709 889.1 709.8 899.2 710.7 909.3 708.2 919.5 703.1 929.6 698 939.7 694.7 949.8 693.8 960 690.8 966.7 691.7 973.5 694.2 980.2 699.3 987 709.4 993.7 721.2 1000.5 729.6 1007.2 736.4 1015.6 739.4 1027.5 738.9 1040.9 738 1054.4 737.7 1067.9 738 1081.4 738.5 1091.5 738 1100 736.4 1106.7 731.3 1111.8 725.4 1118.5 720.3 1126.9 716.1 1137.1 713.6 1148.9 711.9 1160.7 710.2 1167.4 706.8 1175.9 700.9 1184.3 695.9 1194.4 692.5 1204.5 689.1 1214.6 687.5 1223.1 686.6 1229.8 687.5 1240 689.8 1250.1 694.9 1260.2 700.8 1270.4 706.7 1280.5 712.6 1290.6 716.8 1300.7 718.5 1314.2 718.9 1327.7 718.5 1341.2 717.7 1354.7 717.2 1368.2 716.8 1378.3 717.7 1388.4 717.7 1396.8 714.3 1405.3 710.1 1415.4 705.9 1425.5 703.3 1435.6 701.7 1445.7 700.8 1455.9 699.1 1466 697.4 1476.1 696.9 1484.5 695.8 1491.3 691.5 1500 682.1 1505.4 677.4 1510.8 673.3 1518.9 669.3 1527 665.9 1535.1 663.2 1543.2 659.6 1551.3 655.1 1559.4 651.1 1567.5 648.4 1574.2 648.4 1578.2 653.1 1580.9 659.8 1585 665.2 1590.4 669.3 1595.8 670.9 1601.2 668.6 1607.9 662.5 1616 653.1 1624.1 643.6 1632.2 634.2 1640.3 624.8 1648.4 615.3 1656.5 604.5 1664.6 592.4 1671.3 580.2 1676.7 569.4 1681.5 560 1687.5 540 1690.9 525.1 1694.4 513 1699 514.1 1704.8 514.1 1710.6 511.2 1716.4 507.2 1719.9 506 1724 506.6" stroke="#b46ee0" stroke-width="0.95" fill="none" stroke-linejoin="round"/>
<path d="M70.1 502.5 80.2 498.7 90.4 497.5 105.5 499.5 127.5 498.3 140.9 498.3 145.2 501.2 147.7 504.6 161.2 531.5 171.3 560 181.4 588.7 194.9 624.1 220.2 669.6 231.2 700 239.6 720.2 248 742.2 256.5 764.1 263.2 779.3 270 783 276.7 783.5 285.1 785.2 291.9 786.8 302 786.8 312.1 789.4 320.6 794.4 329 799.5 337.4 802 349.2 803.7 361 805.4 369.5 809.6 379.6 814.7 389.7 818.9 400 821.3 412.5 815.5 425 810 440 798.8 450 793.8 462.5 782.5 472.5 772.5 482.5 760 487.7 751.5 501.2 731.3 514.7 714.4 528.2 699.3 543.3 685.8 556.8 674 568.6 663 578.8 657.9 593.9 655.4 619.2 655.4 636.1 659.6 649.6 663.8 663.1 675.6 673.2 689.1 680 694.7 690.1 704.8 700.2 713.2 710.4 718.3 720.5 720.8 730.6 722.2 739 722.5 747.5 721.3 755.9 718.3 764.3 713.2 774.4 704.8 784.6 696.4 794.7 689.6 804.8 683.7 814.9 680.3 825 677.8 833.5 676.1 841.9 675.8 850.3 677 860.4 679.5 865.5 678.7 873.9 677 882.4 676.1 892.5 674.4 902.6 671.1 912.7 665.2 922.8 659.3 929.6 656.7 939.7 655.5 953.2 655 960 654.6 970.1 654.6 980.2 657.1 990.4 665.5 998.8 675.6 1007.2 684.1 1015.6 690.8 1024.1 699.3 1032.5 705.2 1040.9 709.4 1051.1 714.4 1061.2 717 1071.3 718.7 1081.4 719 1091.5 717.8 1101.7 715.3 1111.8 710.2 1120.2 705.2 1128.6 699.3 1137.1 692.5 1145.5 688.3 1153.9 684.9 1162.4 681.6 1170.8 679 1179.2 676.5 1187.7 674.8 1196.1 673.6 1206.2 672.6 1216.3 670.9 1226.4 670.3 1234.9 670.6 1240 672.1 1250.1 676.4 1260.2 681.4 1270.4 687.3 1280.5 693.2 1290.6 697.4 1300.7 700 1310.8 700.8 1320.9 701.7 1331.1 704.2 1339.5 705 1347.9 703.3 1358 700.8 1368.2 699.1 1378.3 700 1388.4 700.8 1396.8 700 1401.9 696.6 1408.6 693.2 1417.1 689.8 1425.5 687.3 1435.6 684.8 1445.7 682.3 1455.9 678.9 1466 676.4 1476.1 672.1 1484.5 667.1 1493 660.3 1500 660.9 1508.1 656.5 1516.2 651.7 1524.3 646.3 1532.4 641.6 1540.5 636.9 1548.6 632.8 1556.7 630.4 1564.8 629.1 1572.8 628.8 1576.9 628.1 1578.9 624.8 1583.6 612.6 1589 600.5 1594.4 589 1599.8 580.2 1606.6 571.5 1613.3 564 1617.4 560 1638.8 540 1648.1 532.1 1658.5 522.8 1666.6 514.7 1675.9 503.1 1682.8 492.7 1689.8 481.1 1694.4 476.5 1699 475.3 1703.7 477.6 1709.5 483.4 1715.3 488.1 1719.9 490.4 1724 489.2" stroke="#f0b858" stroke-width="0.95" fill="none" stroke-linejoin="round"/>
<path d="M70.1 479.3 73.5 479.3 85.3 487.7 93.7 504.6 100.5 521.4 106.4 533.2 110.6 534.9 115.6 529.8 124.1 514.7 132.5 504.6 140.9 502.9 145.2 503.7 151.1 560 157.8 610.6 163.7 700 166.3 725.3 170.5 757.3 177.2 777.6 185.6 791.1 192.4 789.4 196.6 786 200.8 770.8 205.9 757.3 210.9 752.3 217.7 754 221.9 760.7 226.1 779.3 231.2 796.1 236.2 807.9 243 813.8 249.7 810.5 256.5 803.7 263.2 799.5 270 786 278.4 774.2 285.1 767.5 289.4 777.6 296.1 794.4 303.7 807.9 310.4 814.7 317.2 813.8 323.9 818.9 330.7 814.7 335.7 810.5 342.5 809.6 349.2 813 356 818 362.7 823.1 369.5 828.2 376.2 840 381.3 850.1 386.3 851.8 391.4 846.7 400 812.2 405.1 792 410.1 775.1 416.9 765 423.6 753.2 430.4 741.4 437.1 734.7 443.8 733 450.6 736.4 455.6 734.7 460.7 727.9 467.5 714.4 474.2 699.3 480.9 687.5 487.7 679 494.4 674 501.2 667.2 507.9 662.2 514.7 661.3 521.4 664.7 528.2 667.2 534.9 658.8 541.7 648.7 548.4 638.5 555.1 635.2 561.9 634.3 568.6 636 574.9 638.5 580.4 647 585.5 657.1 592.2 667.2 599 672.3 605.7 673.6 612.5 673.1 619.2 668.9 626 670.6 632.7 680.7 639.5 692.5 646.2 700.9 653 709.4 659.7 717 666.4 722.9 673.2 734.7 680 752 686.7 763.8 693.5 765.5 700.2 755.4 707 745.3 713.7 738.5 720.5 721.7 725.5 711.5 730.6 699.7 735.6 687.9 742.4 679.5 749.1 674.4 754.2 671.9 759.3 659.3 764.3 645.8 771.1 634 776.1 627.2 781.2 628.9 786.2 644.1 791.3 659.3 796.4 674.4 801.4 689.6 806.5 697.2 813.2 698.9 820 700.6 826.7 700.6 833.5 698 840.2 696.4 846.9 696.4 853.7 698.9 860.4 698 865.5 687.9 870.6 669.4 875.6 650.8 880.7 634 885.7 623.8 892.5 616.3 899.2 607 904.3 605.3 911 610.4 917.8 619.6 924.5 628.9 931.3 642.4 936.3 655.9 941.4 669.4 946.4 681.2 951.5 687.9 960 690.8 966.7 692.5 973.5 697.6 978.5 707.7 983.6 721.2 988.7 734.7 993.7 744.8 998.8 749 1003.8 749.8 1008.9 745.6 1014 738 1019 732.1 1024.1 724.6 1029.1 716.1 1034.2 707.7 1039.3 699.3 1044.3 697.6 1049.4 699.3 1054.4 702.6 1059.5 706 1064.6 708.5 1069.6 711.9 1074.7 711.9 1079.7 709.4 1084.8 706 1089.8 700.9 1094.9 696.7 1100 695 1105 694.2 1110.1 694.2 1115.1 694.2 1120.2 687.5 1125.3 677.3 1130.3 668.9 1135.4 661.3 1140.4 655.4 1145.5 651.2 1150.6 650.4 1155.6 651.2 1160.7 653.7 1165.7 657.9 1170.8 662.2 1175.9 664.7 1180.9 670.6 1186 675.6 1191 681.6 1196.1 684.9 1201.1 684.9 1206.2 682.4 1211.3 678.2 1216.3 674 1221.4 674.8 1226.4 678.2 1231.5 685.8 1240 695.8 1246.7 701.7 1253.5 703.3 1261.9 703.3 1268.7 705 1275.4 709.2 1282.2 716.8 1288.9 722.7 1294 721.9 1299 715.1 1304.1 710.1 1309.1 703.3 1314.2 698.3 1319.3 694.9 1326 693.2 1332.7 693.2 1339.5 694.1 1346.2 688.2 1353 680.6 1358 676.4 1364.8 676.4 1369.8 683.1 1374.9 693.2 1380 701.7 1386.7 707.6 1393.5 709.2 1398.5 703.3 1403.6 691.5 1408.6 679.7 1413.7 669.6 1418.8 664.6 1425.5 661.2 1432.2 662 1437.3 665.4 1444 667.1 1450.8 662.9 1457.5 660.3 1464.3 659.5 1471 656.1 1477.8 649.4 1484.5 639.3 1489.6 634.2 1500 630.2 1508.1 626.1 1513.5 618 1520.2 609.9 1527 606.5 1533.7 605.9 1540.5 607.9 1545.9 610.6 1551.3 615.3 1556.7 623.4 1562.1 631.5 1567.5 636.9 1572.8 643.6 1576.9 646.3 1578.9 635.5 1580.9 614 1587.8 540 1591.3 504.3 1594.8 457.9 1598.2 423.2 1600 412.7 1604 415.1 1608.7 423.2 1612.1 438.2 1615.6 455.6 1620.3 474.2 1624.9 488.1 1629.5 496.2 1634.2 502 1638.8 506.6 1643.4 510.1 1648.1 507.8 1652.7 506.6 1658.5 505.4 1664.3 502 1670.1 496.2 1675.9 492.7 1680.5 485.7 1685.1 477.6 1689.8 476.5 1694.4 476.5 1699 477.1 1704.8 481.1 1710.6 484.6 1716.4 489.2 1723.4 489.8" stroke="#b4dc80" stroke-width="0.95" fill="none" stroke-linejoin="round"/>
<rect x="1720.4" y="449.8" width="5.4" height="35" fill="#ffff20"/>
<path d="M76.2 468.1h1.5v1.5h-1.5zM81.2 469.8h1.5v1.5h-1.5zM85.8 472.1h1.5v1.5h-1.5zM90.7 475.9h1.5v1.5h-1.5zM95.3 482.2h1.5v1.5h-1.5zM100 491.1h1.5v1.5h-1.5zM109.8 505.9h1.5v1.5h-1.5zM147.8 472.9h1.5v1.5h-1.5zM152.6 483.6h1.5v1.5h-1.5zM157.3 501.2h1.5v1.5h-1.5zM162.2 523.1h1.5v1.5h-1.5zM171.8 580.4h1.5v1.5h-1.5zM176.4 612h1.5v1.5h-1.5zM181.2 645.8h1.5v1.5h-1.5zM185.8 679.4h1.5v1.5h-1.5zM190.8 706.9h1.5v1.5h-1.5zM195.1 729.6h1.5v1.5h-1.5zM228.8 726.5h1.5v1.5h-1.5zM233.4 728.8h1.5v1.5h-1.5zM238.6 731h1.5v1.5h-1.5zM243.2 734.6h1.5v1.5h-1.5zM247.9 738.4h1.5v1.5h-1.5zM252.7 742.2h1.5v1.5h-1.5zM257.4 745.6h1.5v1.5h-1.5zM262.1 749h1.5v1.5h-1.5zM290.9 748.1h1.5v1.5h-1.5zM295.6 751.9h1.5v1.5h-1.5zM300.4 754.9h1.5v1.5h-1.5zM305.1 758.6h1.5v1.5h-1.5zM309.6 762h1.5v1.5h-1.5zM314.4 764.6h1.5v1.5h-1.5zM319.4 768h1.5v1.5h-1.5zM324.1 771h1.5v1.5h-1.5zM328.8 773.5h1.5v1.5h-1.5zM333.6 776h1.5v1.5h-1.5zM338.4 778.5h1.5v1.5h-1.5zM343.1 781h1.5v1.5h-1.5zM347.8 783.2h1.5v1.5h-1.5zM352.6 785.2h1.5v1.5h-1.5zM357.4 787.2h1.5v1.5h-1.5zM362.1 791.1h1.5v1.5h-1.5zM367.1 795h1.5v1.5h-1.5zM371.8 800.5h1.5v1.5h-1.5zM376.4 807.1h1.5v1.5h-1.5zM381.1 819h1.5v1.5h-1.5zM518.6 642.9h1.5v1.5h-1.5zM523.4 644.5h1.5v1.5h-1.5zM528 646.2h1.5v1.5h-1.5zM585.2 619.2h1.5v1.5h-1.5zM590 621.8h1.5v1.5h-1.5zM594.9 625.6h1.5v1.5h-1.5zM599.5 629h1.5v1.5h-1.5zM604.4 632.5h1.5v1.5h-1.5zM609 635.8h1.5v1.5h-1.5zM613.8 638.6h1.5v1.5h-1.5zM618.5 641.1h1.5v1.5h-1.5zM623.1 644.9h1.5v1.5h-1.5zM628 650h1.5v1.5h-1.5zM632.9 656.6h1.5v1.5h-1.5zM637.5 664.5h1.5v1.5h-1.5zM642.2 670.6h1.5v1.5h-1.5zM647 678.2h1.5v1.5h-1.5zM651.6 688.4h1.5v1.5h-1.5zM656.5 696.9h1.5v1.5h-1.5zM661.1 704h1.5v1.5h-1.5zM665.9 712h1.5v1.5h-1.5zM670.5 721.2h1.5v1.5h-1.5zM675.4 730.5h1.5v1.5h-1.5zM680 740.6h1.5v1.5h-1.5zM684.8 749h1.5v1.5h-1.5zM780.5 608.2h1.5v1.5h-1.5zM785.1 610.5h1.5v1.5h-1.5zM789.9 616h1.5v1.5h-1.5zM794.5 621h1.5v1.5h-1.5zM799.4 628.5h1.5v1.5h-1.5zM804 637h1.5v1.5h-1.5zM808.8 644.6h1.5v1.5h-1.5zM813.6 651.8h1.5v1.5h-1.5zM818.4 657.6h1.5v1.5h-1.5zM823 663h1.5v1.5h-1.5zM827.9 668.1h1.5v1.5h-1.5zM832.5 672.9h1.5v1.5h-1.5zM837.2 677h1.5v1.5h-1.5zM842 680.8h1.5v1.5h-1.5zM846.9 684.1h1.5v1.5h-1.5zM851.5 688h1.5v1.5h-1.5zM856.4 690.9h1.5v1.5h-1.5zM861 694h1.5v1.5h-1.5zM928 588h1.5v1.5h-1.5zM932.8 591.5h1.5v1.5h-1.5zM937.5 597.8h1.5v1.5h-1.5zM942.1 605.8h1.5v1.5h-1.5zM946.9 615.9h1.5v1.5h-1.5zM951.5 626h1.5v1.5h-1.5zM956.4 634h1.5v1.5h-1.5zM961.2 642h1.5v1.5h-1.5zM966 649.2h1.5v1.5h-1.5zM970.8 656.6h1.5v1.5h-1.5zM975.5 666.1h1.5v1.5h-1.5zM980.1 676.5h1.5v1.5h-1.5zM984.9 690.5h1.5v1.5h-1.5zM989.6 706.6h1.5v1.5h-1.5zM994.4 719.5h1.5v1.5h-1.5zM999 729.8h1.5v1.5h-1.5zM1065.8 678.2h1.5v1.5h-1.5zM1070.5 680h1.5v1.5h-1.5zM1075.2 682h1.5v1.5h-1.5zM1080 683.9h1.5v1.5h-1.5zM1084.8 685.9h1.5v1.5h-1.5zM1165.7 638.1h1.5v1.5h-1.5zM1170.3 638.6h1.5v1.5h-1.5zM1175.2 639.1h1.5v1.5h-1.5zM1180 640.6h1.5v1.5h-1.5zM1184.8 644h1.5v1.5h-1.5zM1189.5 648h1.5v1.5h-1.5zM1194.2 651.2h1.5v1.5h-1.5zM1198.8 655h1.5v1.5h-1.5zM1203.8 658.4h1.5v1.5h-1.5zM1208.5 660.5h1.5v1.5h-1.5zM1213.2 663.5h1.5v1.5h-1.5zM1218 666h1.5v1.5h-1.5zM1222.8 668.1h1.5v1.5h-1.5zM1227.5 670.4h1.5v1.5h-1.5zM1232.2 674.5h1.5v1.5h-1.5zM1237 679.1h1.5v1.5h-1.5zM1241.8 683.8h1.5v1.5h-1.5zM1246.5 686.5h1.5v1.5h-1.5zM1251.2 690h1.5v1.5h-1.5zM1256 693.4h1.5v1.5h-1.5zM1260.7 696.1h1.5v1.5h-1.5zM1265.3 699.2h1.5v1.5h-1.5zM1270.2 702.5h1.5v1.5h-1.5zM1274.8 708.5h1.5v1.5h-1.5zM1279.8 713h1.5v1.5h-1.5zM1284.5 718.1h1.5v1.5h-1.5zM1289.2 722.5h1.5v1.5h-1.5zM1370.2 663.5h1.5v1.5h-1.5zM1375 665.5h1.5v1.5h-1.5zM1379.8 668.9h1.5v1.5h-1.5zM1384.5 671.9h1.5v1.5h-1.5zM1389.2 675.2h1.5v1.5h-1.5zM1394 678.1h1.5v1.5h-1.5zM1546.5 596.4h1.5v1.5h-1.5zM1551.2 598.4h1.5v1.5h-1.5zM1556 600.9h1.5v1.5h-1.5zM1560.7 603.8h1.5v1.5h-1.5zM1565.3 606.8h1.5v1.5h-1.5zM1570 611.1h1.5v1.5h-1.5zM1574.8 618h1.5v1.5h-1.5zM1636.8 340.1h1.5v1.5h-1.5zM1641.5 343.9h1.5v1.5h-1.5zM1646.2 347.9h1.5v1.5h-1.5zM1651 351.4h1.5v1.5h-1.5zM1655.8 355.1h1.5v1.5h-1.5zM1660.5 358.8h1.5v1.5h-1.5zM1665.2 362.4h1.5v1.5h-1.5zM1670 365.8h1.5v1.5h-1.5zM1674.8 369.1h1.5v1.5h-1.5zM1679.5 372.2h1.5v1.5h-1.5zM1684.2 375.6h1.5v1.5h-1.5zM1689 378.6h1.5v1.5h-1.5zM1693.8 381.8h1.5v1.5h-1.5zM1698.5 384.9h1.5v1.5h-1.5zM1703.2 387.8h1.5v1.5h-1.5zM1708 390.8h1.5v1.5h-1.5zM1712.8 393.4h1.5v1.5h-1.5zM1717.5 396.4h1.5v1.5h-1.5zM1722.3 399.1h1.5v1.5h-1.5z" fill="#dcaa7c"/>
<path d="M114.5 554.4h1.5v1.5h-1.5zM119.5 552.4h1.5v1.5h-1.5zM124.2 550.1h1.5v1.5h-1.5zM128.8 548.5h1.5v1.5h-1.5zM133.7 546.9h1.5v1.5h-1.5zM138.3 544.6h1.5v1.5h-1.5zM143.1 540h1.5v1.5h-1.5zM223.8 820.6h1.5v1.5h-1.5zM200.1 830.5h1.5v1.5h-1.5zM204.8 828.2h1.5v1.5h-1.5zM209.6 826h1.5v1.5h-1.5zM214.4 824.4h1.5v1.5h-1.5zM219.2 822.4h1.5v1.5h-1.5zM266.6 828.2h1.5v1.5h-1.5zM271.8 826.5h1.5v1.5h-1.5zM276.4 824h1.5v1.5h-1.5zM281.4 819.9h1.5v1.5h-1.5zM286.1 817.2h1.5v1.5h-1.5zM390.6 881h1.5v1.5h-1.5zM395.4 877.6h1.5v1.5h-1.5zM400.1 871.4h1.5v1.5h-1.5zM404.8 861h1.5v1.5h-1.5zM409.6 848.8h1.5v1.5h-1.5zM414.2 838h1.5v1.5h-1.5zM419.1 828h1.5v1.5h-1.5zM423.8 819.2h1.5v1.5h-1.5zM433.2 796h1.5v1.5h-1.5zM438.1 782.5h1.5v1.5h-1.5zM442.8 771h1.5v1.5h-1.5zM447.6 761.2h1.5v1.5h-1.5zM461.6 731.9h1.5v1.5h-1.5zM466.8 721.2h1.5v1.5h-1.5zM471.4 713.6h1.5v1.5h-1.5zM476.1 706.5h1.5v1.5h-1.5zM480.9 698.5h1.5v1.5h-1.5zM485.6 689.2h1.5v1.5h-1.5zM490.4 682h1.5v1.5h-1.5zM495.1 682.5h1.5v1.5h-1.5zM499.8 683h1.5v1.5h-1.5zM504.4 680.9h1.5v1.5h-1.5zM509.1 679.1h1.5v1.5h-1.5zM514 677.5h1.5v1.5h-1.5zM532.9 686.4h1.5v1.5h-1.5zM537.5 685.4h1.5v1.5h-1.5zM542.5 683h1.5v1.5h-1.5zM547.4 680.2h1.5v1.5h-1.5zM552 678h1.5v1.5h-1.5zM556.8 674.9h1.5v1.5h-1.5zM561.5 672.9h1.5v1.5h-1.5zM566.1 670.6h1.5v1.5h-1.5zM571 668.5h1.5v1.5h-1.5zM575.6 666.5h1.5v1.5h-1.5zM695.1 781.8h1.5v1.5h-1.5zM700 779.8h1.5v1.5h-1.5zM704.5 776.2h1.5v1.5h-1.5zM709.2 772.4h1.5v1.5h-1.5zM714 766.8h1.5v1.5h-1.5zM718.8 757.1h1.5v1.5h-1.5zM723.5 747h1.5v1.5h-1.5zM728.1 736h1.5v1.5h-1.5zM732.9 726.5h1.5v1.5h-1.5zM737.5 717.5h1.5v1.5h-1.5zM742.4 704.9h1.5v1.5h-1.5zM747 695.2h1.5v1.5h-1.5zM756.9 678.5h1.5v1.5h-1.5zM761.5 665.2h1.5v1.5h-1.5zM766.2 653.5h1.5v1.5h-1.5zM771 644.1h1.5v1.5h-1.5zM775.8 636.5h1.5v1.5h-1.5zM866 713.4h1.5v1.5h-1.5zM870.6 709.5h1.5v1.5h-1.5zM875.4 706h1.5v1.5h-1.5zM880.2 700.1h1.5v1.5h-1.5zM885 690.9h1.5v1.5h-1.5zM889.8 683.9h1.5v1.5h-1.5zM894.5 676.2h1.5v1.5h-1.5zM899.4 667.2h1.5v1.5h-1.5zM904 659.4h1.5v1.5h-1.5zM908.8 652h1.5v1.5h-1.5zM913.5 645.5h1.5v1.5h-1.5zM1008.6 769.2h1.5v1.5h-1.5zM1013.4 766.8h1.5v1.5h-1.5zM1018.1 765h1.5v1.5h-1.5zM1022.9 761.2h1.5v1.5h-1.5zM1027.7 758h1.5v1.5h-1.5zM1032.3 753h1.5v1.5h-1.5zM1037.2 745.5h1.5v1.5h-1.5zM1041.8 738h1.5v1.5h-1.5zM1046.7 730.2h1.5v1.5h-1.5zM1051.5 724.1h1.5v1.5h-1.5zM1056.2 718.5h1.5v1.5h-1.5zM1094.2 726h1.5v1.5h-1.5zM1098.8 725.5h1.5v1.5h-1.5zM1103.8 723.5h1.5v1.5h-1.5zM1108.5 721.2h1.5v1.5h-1.5zM1113.2 719.5h1.5v1.5h-1.5zM1118.2 717.4h1.5v1.5h-1.5zM1122.8 714h1.5v1.5h-1.5zM1127.5 708.6h1.5v1.5h-1.5zM1132.2 702.8h1.5v1.5h-1.5zM1137.2 696.5h1.5v1.5h-1.5zM1141.8 688.8h1.5v1.5h-1.5zM1146.7 680.9h1.5v1.5h-1.5zM1151.5 673.5h1.5v1.5h-1.5zM1156.2 668.1h1.5v1.5h-1.5zM1294 736.6h1.5v1.5h-1.5zM1298.8 734.6h1.5v1.5h-1.5zM1303.5 732.5h1.5v1.5h-1.5zM1308.2 730.5h1.5v1.5h-1.5zM1313.2 728.4h1.5v1.5h-1.5zM1317.8 726.1h1.5v1.5h-1.5zM1322.5 724.1h1.5v1.5h-1.5zM1327.2 722.5h1.5v1.5h-1.5zM1332 720.9h1.5v1.5h-1.5zM1336.8 718.6h1.5v1.5h-1.5zM1341.7 717h1.5v1.5h-1.5zM1346.3 712.4h1.5v1.5h-1.5zM1351 707.6h1.5v1.5h-1.5zM1355.8 702.5h1.5v1.5h-1.5zM1360.7 698.4h1.5v1.5h-1.5zM1365.3 695h1.5v1.5h-1.5zM1403.7 722.5h1.5v1.5h-1.5zM1408.3 720.2h1.5v1.5h-1.5zM1413.2 715.8h1.5v1.5h-1.5zM1418 709.9h1.5v1.5h-1.5zM1422.8 704.6h1.5v1.5h-1.5zM1427.5 700h1.5v1.5h-1.5zM1432.2 695.4h1.5v1.5h-1.5zM1437 691.6h1.5v1.5h-1.5zM1441.8 687.8h1.5v1.5h-1.5zM1446.5 684.4h1.5v1.5h-1.5zM1451.2 680.6h1.5v1.5h-1.5zM1456 677.2h1.5v1.5h-1.5zM1460.8 675.2h1.5v1.5h-1.5zM1465.5 672.5h1.5v1.5h-1.5zM1470.2 670.2h1.5v1.5h-1.5zM1475 667.1h1.5v1.5h-1.5zM1479.8 661.8h1.5v1.5h-1.5zM1484.7 656.2h1.5v1.5h-1.5zM1489.3 651.1h1.5v1.5h-1.5zM1494 646.6h1.5v1.5h-1.5zM1498.8 642.2h1.5v1.5h-1.5zM1503.5 637.5h1.5v1.5h-1.5zM1508.2 632.8h1.5v1.5h-1.5zM1513 625.4h1.5v1.5h-1.5zM1517.8 619.6h1.5v1.5h-1.5zM1522.5 615.8h1.5v1.5h-1.5zM1527.5 614.9h1.5v1.5h-1.5zM1532.2 614h1.5v1.5h-1.5zM1536.8 613.2h1.5v1.5h-1.5zM1584.2 654.8h1.5v1.5h-1.5zM1589.2 642h1.5v1.5h-1.5zM1594 629.9h1.5v1.5h-1.5zM1598.7 612.2h1.5v1.5h-1.5zM1603.3 595.6h1.5v1.5h-1.5zM1608.2 580.1h1.5v1.5h-1.5zM1613 565.4h1.5v1.5h-1.5z" fill="#e6e6da"/>
<path d="M66 449.6H1773" stroke="#cfc8bc" stroke-width="1.6"/>
<path d="M0 441.6H62.8L69.2 449.8L62.8 458H0z" fill="#ece4d8"/>
<g font-family="'Liberation Sans',sans-serif"><text x="6.1 12.3 18.5 24.7 30.9 37.1 43.3 49.5 55.7" y="453.8" font-size="10.9" text-anchor="middle" fill="#000">53,358.71</text></g>
</svg>
<svg class="abs" style="left:14px;top:6.5px" width="17" height="17" viewBox="0 0 16 16"><g fill="none" stroke="#c8c8c8" stroke-width="1.6"><circle cx="10.8" cy="5.2" r="2.6"/><circle cx="5.2" cy="10.8" r="2.6"/></g><path d="M6.8 9.2L9.2 6.8" stroke="#c8c8c8" stroke-width="1.8"/></svg>
<div class="sel" style="left:37px;top:4.5px;width:111px"><span class="nar" style="transform:scaleX(.77)">マーケット</span><i></i></div>
<div class="sel" style="left:153.5px;top:4.5px;width:251px;font-size:13.5px">日経225<i></i></div>
<div class="sel" style="left:411.5px;top:4.5px;width:74px">1分足<i></i></div>
<div class="btn" style="left:492px;width:18.5px"><svg width="16" height="18" viewBox="0 0 16 18"><path d="M10 4.5L5.5 9L10 13.5" fill="none" stroke="#ddd" stroke-width="1.6"/></svg></div>
<div class="btn" style="left:511px;width:18.5px"><svg width="16" height="18" viewBox="0 0 16 18"><path d="M6 4.5L10.5 9L6 13.5" fill="none" stroke="#ddd" stroke-width="1.6"/></svg></div>
<div class="btn on" style="left:536px;width:60.5px">表示期間</div>
<div class="btn" style="left:603px;width:60.5px"><span style="transform:scaleX(.8);transform-origin:50% 50%;margin:0 -6px">テクニカル</span></div>
<div class="btn on" style="left:670px;width:53px">通常</div>
<div class="btn" style="left:723px;width:53px">指数化</div>
<div class="btn" style="left:776px;width:52.5px"><span style="transform:scaleX(.8);transform-origin:50% 50%;margin:0 -8px">スプレッド</span></div>
<div class="ib " style="left:835px"><svg width="20" height="20" viewBox="0 0 20 20" style="left:-1px;top:-1px"><path d="M10 4V16M4 10H16" stroke="#e4e4e4" fill="none" stroke-width="1.3"/></svg></div>
<div class="ib " style="left:862px"><svg width="20" height="20" viewBox="0 0 20 20" style="left:-1px;top:-1px"><circle cx="9" cy="9" r="5" stroke="#e4e4e4" fill="none" stroke-width="1.5"/><path d="M12.8 12.8L16.5 16.5" stroke="#e4e4e4" fill="none" stroke-width="2"/><path d="M9 6.5V11.5M6.5 9H11.5" stroke="#e4e4e4" fill="none" stroke-width="1.5"/></svg></div>
<div class="ib " style="left:885px"><svg width="20" height="20" viewBox="0 0 20 20" style="left:-1px;top:-1px"><g opacity=".35"><circle cx="9" cy="9" r="5" stroke="#e4e4e4" fill="none" stroke-width="1.5"/><path d="M12.8 12.8L16.5 16.5" stroke="#e4e4e4" fill="none" stroke-width="2"/><path d="M6.5 9H11.5" stroke="#e4e4e4" fill="none" stroke-width="1.5"/></g></svg></div>
<div class="ib " style="left:912px"><svg width="20" height="20" viewBox="0 0 20 20" style="left:-1px;top:-1px"><path d="M4.5 15.5L6 11.5L13 4.5L15.5 7L8.5 14z" fill="#e4e4e4"/><path d="M7 12L13.5 5.5M8 13.5L14.5 6.5" stroke="#555" stroke-width=".8"/></svg></div>
<div class="ib " style="left:939px"><svg width="20" height="20" viewBox="0 0 20 20" style="left:-1px;top:-1px"><path d="M3 9L5.5 6L8 12L10.5 3.5L13 8.5L15.5 6" stroke="#e4e4e4" fill="none" stroke-width="1.4"/><path d="M11.5 10.5L11.5 17L13.2 15.4L14.6 18L15.8 17.4L14.5 14.8L16.8 14.6z" fill="#e4e4e4"/></svg></div>
<div class="ib on" style="left:966px"><svg width="20" height="20" viewBox="0 0 20 20" style="left:-1px;top:-1px"><path d="M5.5 4.5L10 10L14.5 4.5M10 10V16M6 10.5H14M6 13H14" stroke="#fff" fill="none" stroke-width="1.7"/></svg></div>
<div class="ib " style="left:993px"><svg width="20" height="20" viewBox="0 0 20 20" style="left:-1px;top:-1px"><circle cx="10" cy="10" r="6.2" fill="#e4e4e4"/><path d="M10 9V13.5" stroke="#444" stroke-width="2"/><circle cx="10" cy="6.6" r="1.1" fill="#444"/></svg></div>
<div class="ib " style="left:1020px"><svg width="20" height="20" viewBox="0 0 20 20" style="left:-1px;top:-1px"><text x="2" y="8.5" font-size="7" font-weight="bold" fill="#e4e4e4" font-family="Liberation Sans,sans-serif">MY</text><path d="M7.5 10V18M11 8.5V17M14.5 9.5V18" stroke="#e4e4e4" stroke-width="1"/><path d="M6.3 12h2.4v4h-2.4zM9.8 11h2.4v4h-2.4zM13.3 11.5h2.4v4h-2.4z" fill="#e4e4e4"/></svg></div>
<div class="ib " style="left:1047px"><svg width="20" height="20" viewBox="0 0 20 20" style="left:-1px;top:-1px"><path d="M2.5 14.5V11L5 8.5L7 10.5L9 6.5L10.5 9L12 7L13.5 9.5L15.5 8L17.5 10.5V14.5z" fill="#e4e4e4"/></svg></div>
<div class="ib " style="left:1074px"><svg width="20" height="20" viewBox="0 0 20 20" style="left:-1px;top:-1px"><path d="M4.5 15.8L10.5 9.8" stroke="#e4e4e4" stroke-width="2.6" stroke-linecap="round"/><path d="M15.6 5.2a3.6 3.6 0 1 1 -3.4 -1.2l-0.4 2.8l2 1z" fill="#e4e4e4"/></svg></div>
<div class="ib " style="left:1108px"><svg width="20" height="20" viewBox="0 0 20 20" style="left:-1px;top:-1px"><path d="M6 3.5h6l2 2V9H6z" fill="#e4e4e4"/><path d="M3.5 10h13v4h-13z" fill="#e4e4e4"/><path d="M5.5 15h9v1.5h-9z" fill="#e4e4e4"/><path d="M5 12H15" stroke="#555" stroke-width=".8"/></svg></div>
<div class="ib " style="left:1135px"><svg width="20" height="20" viewBox="0 0 20 20" style="left:-1px;top:-1px"><path d="M3.5 4.5h13v11.5h-13z" stroke="#e4e4e4" fill="none" stroke-width="1.3"/><path d="M3.5 6.5H16.5" stroke="#e4e4e4" fill="none" stroke-width="1.5"/><path d="M10 15V10.5M7.6 11.6L10 9L12.4 11.6z" stroke="#e4e4e4" stroke-width="1.6" fill="#e4e4e4"/></svg></div>
<span class="t " style="left:13px;top:37.6px;font-size:12.8px;">表示期間</span>
<div class="sel" style="left:70.7px;top:32.3px;width:76.5px">本数指定<i></i></div>
<span class="t " style="left:153.5px;top:37.6px;font-size:12.8px;">本数</span>
<div class="sel" style="left:185.8px;top:32.3px;width:41.8px;text-align:right;padding-right:2px;padding-left:0;font-size:13px">358</div>
<div class="btn" style="left:228.3px;top:32.8px;width:14.7px;height:20px"><svg width="12" height="18" viewBox="0 0 12 18"><path d="M2.5 6.5h7L6 11.5z" fill="#d8d8d8"/></svg></div>
<div class="btn" style="left:243.5px;top:32.8px;width:14.7px;height:20px"><svg width="12" height="18" viewBox="0 0 12 18"><path d="M2.5 11.5h7L6 6.5z" fill="#d8d8d8"/></svg></div>
<span class="t " style="left:264px;top:37.6px;font-size:12.8px;">表示期間：</span>
<span class="t " style="left:336.5px;top:37.6px;font-size:12.8px;">2026<b class="pp" style="width:7.12px">/</b>01<b class="pp" style="width:7.12px">/</b>27<b class="pp" style="width:7.12px">&nbsp;</b>15<b class="pp" style="width:7.12px">:</b>15<b class="pp" style="width:7.12px">&nbsp;</b><b class="pp" style="width:14.24px">～</b><b class="pp" style="width:7.12px">&nbsp;</b>2026<b class="pp" style="width:7.12px">/</b>01<b class="pp" style="width:7.12px">/</b>28<b class="pp" style="width:7.12px">&nbsp;</b>15<b class="pp" style="width:7.12px">:</b>30</span>
<div class="btn" style="left:600px;top:33px;width:20.5px;height:20px"><svg width="18" height="18" viewBox="0 0 18 18"><path d="M4 5.5h7.5a3 3 0 0 1 0 6H7" fill="none" stroke="#e4e4e4" stroke-width="2"/><path d="M8.5 8.2L4.6 11.5L8.5 14.8z" fill="#e4e4e4"/></svg></div>
<span class="t " style="left:13.5px;top:67.75px;font-size:14.5px;color:#e4688a;letter-spacing:0.7px">日経225</span>
<span class="t cy" style="left:320px;top:68.5px;font-size:13px;">現在値</span>
<span class="t ye" style="left:389.5px;top:68.5px;font-size:13px;">53<b class="pp" style="width:7.25px">,</b>358<b class="pp" style="width:7.25px">.</b>71</span>
<span class="t rd" style="left:518.5px;top:68.5px;font-size:13px;"><b class="pp" style="width:7.25px">+</b>25<b class="pp" style="width:7.25px">.</b>17</span>
<span class="t rd" style="left:615.5px;top:68.5px;font-size:13px;"><b class="pp" style="width:7.25px">+</b>0<b class="pp" style="width:7.25px">.</b>05<b class="pp" style="width:7.25px"><b style="display:inline-block;transform:scaleX(.68);font-weight:normal">%</b></b></span>
<span class="t ye" style="left:681px;top:68.5px;font-size:13px;">26<b class="pp" style="width:7.25px">/</b>01<b class="pp" style="width:7.25px">/</b>28<b class="pp" style="width:7.25px">&nbsp;</b><b class="pp" style="width:7.25px">&nbsp;</b>15<b class="pp" style="width:7.25px">:</b>45</span>
<span class="t cy" style="left:13px;top:93.0px;font-size:13px;">始値</span>
<span class="t ye" style="left:76px;top:93.0px;font-size:13px;">53<b class="pp" style="width:7.25px">,</b>023<b class="pp" style="width:7.25px">.</b>88<b class="pp" style="width:7.25px">&nbsp;</b>09<b class="pp" style="width:7.25px">:</b>00</span>
<span class="t cy" style="left:208px;top:93.0px;font-size:13px;">高値</span>
<span class="t ye" style="left:271px;top:93.0px;font-size:13px;">53<b class="pp" style="width:7.25px">,</b>507<b class="pp" style="width:7.25px">.</b>18<b class="pp" style="width:7.25px">&nbsp;</b>15<b class="pp" style="width:7.25px">:</b>04</span>
<span class="t cy" style="left:403px;top:93.0px;font-size:13px;">安値</span>
<span class="t ye" style="left:466px;top:93.0px;font-size:13px;">52<b class="pp" style="width:7.25px">,</b>788<b class="pp" style="width:7.25px">.</b>10<b class="pp" style="width:7.25px">&nbsp;</b>09<b class="pp" style="width:7.25px">:</b>48</span>
<span class="t cy" style="left:598px;top:93.0px;font-size:13px;">前日終値</span>
<span class="t ye" style="left:687px;top:93.0px;font-size:13px;">53<b class="pp" style="width:7.25px">,</b>333<b class="pp" style="width:7.25px">.</b>54</span>
<span class="t cy" style="left:767px;top:93.0px;font-size:13px;">出来高</span>
<span class="t " style="left:861px;top:72.75px;font-size:24.5px;color:#f0f0f0;letter-spacing:0.3px">実現損益</span>
<div class="abs" style="left:975px;top:71.5px;width:24px;height:24px;border-radius:50%;background:radial-gradient(circle at 50% 40%,#f0a040,#d87818);"></div><div class="abs" style="left:984px;top:74px;width:6px;height:19px;"><svg width="6" height="19" viewBox="0 0 6 19"><path d="M1.2 1h3.6L4.2 12H1.8z" fill="#fff"/><circle cx="3" cy="15.5" r="1.8" fill="#fff"/></svg></div>
<span class="t " style="left:1041.5px;top:71.5px;font-size:25px;color:#e03434"><b class="pp" style="width:14.1px">+</b>41<b class="pp" style="width:14.1px">,</b>300円</span>
<span class="t " style="left:1212px;top:71.5px;font-size:25px;color:#f4f4f4">2026<b class="pp" style="width:14.3px">/</b>01<b class="pp" style="width:14.3px">/</b>28</span>
<div class="pn" style="top:146.7px;height:276.6px"><div class="row" style="top:0.5px"><div class="nm"><div class="nmt" style="">日経平均株価</div><div class="sb" style="left:49.5px;width:69px;padding-left:13px">寄与度</div><svg width="17" height="17" viewBox="0 0 17 17" style="position:absolute;left:101px;top:3px"><circle cx="8.5" cy="8.5" r="8.3" fill="#4aa8ec"/><path d="M4.4 4.2L11.2 12.8M12.6 4.2L4.6 12.8" stroke="#eaf4fc" stroke-width=".9" fill="none"/><path d="M5.8 4.2L12.6 12.8" stroke="#eaf4fc" stroke-width=".9" fill="none"/></svg></div><div class="fl"><svg width="25.5" height="26" viewBox="0 0 25.5 26" style="position:absolute;left:0;top:0"><circle cx="12.8" cy="13" r="11.8" fill="#7e7e7e"/><circle cx="12.8" cy="13" r="5.7" fill="#8a4a40"/></svg><div class="dt">01/28</div></div><div class="mc"><svg width="75.5" height="37.3" viewBox="0 0 75.5 37.3"><defs><linearGradient id="gr1" x1="0" y1="0" x2="0" y2="1"><stop offset="0" stop-color="#f9d4d4"/><stop offset="1" stop-color="#f0a0a0"/></linearGradient><linearGradient id="gg1" x1="0" y1="0" x2="0" y2="1"><stop offset="0" stop-color="#9ad08c"/><stop offset="1" stop-color="#cfeac6"/></linearGradient></defs><rect width="75.5" height="37.3" fill="#e9e9eb"/><rect width="75.5" height="6.4" fill="#e2e2f2"/><path d="M0 9.5H75.5" stroke="#dddde0" stroke-width=".5"/><path d="M0 19H75.5" stroke="#dddde0" stroke-width=".5"/><path d="M0 28.5H75.5" stroke="#dddde0" stroke-width=".5"/><rect x="29.5" y="6.4" width="11.0" height="8.6" fill="#f3d6d6"/><path d="M0.0 19.6 2.4 21.6 5.0 22.3 7.7 22.9 9.7 24.9 11.0 20.9 13.0 17.0 15.0 15.0 17.0 13.6 18.9 16.3 20.9 20.3 22.9 16.3 24.9 13.6 26.9 17.6 29.5 17.2 L29.5 6.4 L0.0 6.4 Z" fill="url(#gr1)"/><path d="M0.0 19.6 2.4 21.6 5.0 22.3 7.7 22.9 9.7 24.9 11.0 20.9 13.0 17.0 15.0 15.0 17.0 13.6 18.9 16.3 20.9 20.3 22.9 16.3 24.9 13.6 26.9 17.6 29.5 17.2" fill="none" stroke="#cc3c3c" stroke-width=".8" stroke-linejoin="round"/><path d="M40.5 13.0 42.8 16.3 45.0 19.6 47.4 17.0 49.4 15.6 51.4 13.6 53.4 15.6 56.0 17.0 58.7 17.6 61.3 16.3 64.0 15.0 66.0 13.6 68.0 12.3 69.0 9.0 69.2 6.4 L69.2 6.4 L40.5 6.4 Z" fill="url(#gr1)"/><path d="M40.5 13.0 42.8 16.3 45.0 19.6 47.4 17.0 49.4 15.6 51.4 13.6 53.4 15.6 56.0 17.0 58.7 17.6 61.3 16.3 64.0 15.0 66.0 13.6 68.0 12.3 69.0 9.0 69.2 6.4" fill="none" stroke="#cc3c3c" stroke-width=".8" stroke-linejoin="round"/><path d="M69.2 6.4 69.5 1.7 70.6 5.0 72.0 7.0 74.6 6.4" fill="none" stroke="#333" stroke-width=".8" stroke-linejoin="round"/><path d="M0 6.4H75.5" stroke="#6c6ad0" stroke-width="1" stroke-dasharray="1.3 1.2"/><g fill="#a8a8a8"><rect x="1" y="33.8" width="4" height="1.5"/><rect x="32" y="33.8" width="3.4" height="1.5"/><rect x="67" y="33.8" width="3.4" height="1.5"/></g></svg></div><div class="lt" style=""><div class="pr">53,358<small>.71</small></div><div class="ch up">+25<small>.17</small></div><div class="pc up" style=""><i>▲</i>0.05<small>%</small></div><div class="hl">H:53,507<small>.18</small><br>L:52,788<small>.10</small></div></div></div><div class="row" style="top:40.0px"><div class="nm"><div class="nmt" style="">TOPIX</div><div class="sb" style="left:82.5px;width:35.5px;padding-left:8px"><svg width="8" height="8" viewBox="0 0 8 8" style="position:absolute;left:5px;top:3.4px"><rect width="8" height="7" fill="#e8e8e8"/><path d="M2 5.5L5.5 2M3.5 2H5.5V4" stroke="#444" stroke-width="1" fill="none"/></svg><span style="margin-left:8px;font-weight:bold;font-size:11px;letter-spacing:1px">Y!</span></div></div><div class="fl"><svg width="25.5" height="26" viewBox="0 0 25.5 26" style="position:absolute;left:0;top:0"><circle cx="12.8" cy="13" r="11.8" fill="#7e7e7e"/><circle cx="12.8" cy="13" r="5.7" fill="#8a4a40"/></svg><div class="dt">01/28</div></div><div class="mc"><svg width="75.5" height="37.3" viewBox="0 0 75.5 37.3"><defs><linearGradient id="gr2" x1="0" y1="0" x2="0" y2="1"><stop offset="0" stop-color="#f9d4d4"/><stop offset="1" stop-color="#f0a0a0"/></linearGradient><linearGradient id="gg2" x1="0" y1="0" x2="0" y2="1"><stop offset="0" stop-color="#9ad08c"/><stop offset="1" stop-color="#cfeac6"/></linearGradient></defs><rect width="75.5" height="37.3" fill="#e9e9eb"/><rect width="75.5" height="14.2" fill="#e2e2f2"/><path d="M0 9.5H75.5" stroke="#dddde0" stroke-width=".5"/><path d="M0 19H75.5" stroke="#dddde0" stroke-width=".5"/><path d="M0 28.5H75.5" stroke="#dddde0" stroke-width=".5"/><rect x="28.2" y="14.2" width="12.3" height="9.8" fill="#f3d6d6"/><path d="M0.0 26.5 2.4 27.8 5.0 26.5 7.7 27.8 9.7 29.1 11.7 25.8 14.3 25.2 17.0 25.8 19.6 27.2 22.3 28.2 24.9 26.9 28.2 27.2 L28.2 14.2 L0.0 14.2 Z" fill="url(#gr2)"/><path d="M0.0 26.5 2.4 27.8 5.0 26.5 7.7 27.8 9.7 29.1 11.7 25.8 14.3 25.2 17.0 25.8 19.6 27.2 22.3 28.2 24.9 26.9 28.2 27.2" fill="none" stroke="#cc3c3c" stroke-width=".8" stroke-linejoin="round"/><path d="M40.5 23.2 41.5 21.9 43.4 24.5 47.4 25.2 51.4 25.2 55.4 25.8 58.7 26.5 61.3 25.6 64.0 23.8 66.0 23.2 68.3 21.2 70.6 23.4 L70.6 14.2 L40.5 14.2 Z" fill="url(#gr2)"/><path d="M40.5 23.2 41.5 21.9 43.4 24.5 47.4 25.2 51.4 25.2 55.4 25.8 58.7 26.5 61.3 25.6 64.0 23.8 66.0 23.2 68.3 21.2 70.6 23.4" fill="none" stroke="#cc3c3c" stroke-width=".8" stroke-linejoin="round"/><path d="M0 14.2H75.5" stroke="#6c6ad0" stroke-width="1" stroke-dasharray="1.3 1.2"/><g fill="#a8a8a8"><rect x="1" y="33.8" width="4" height="1.5"/><rect x="32" y="33.8" width="3.4" height="1.5"/><rect x="67" y="33.8" width="3.4" height="1.5"/></g></svg></div><div class="lt" style=""><div class="pr">3,535<small>.49</small></div><div class="ch dn">-28<small>.10</small></div><div class="pc dn" style=""><i>▼</i>0.79<small>%</small></div><div class="hl">H:3,548<small>.69</small><br>L:3,520<small>.40</small></div></div></div><div class="row" style="top:79.5px"><div class="nm"><div class="nmt" style="">JPX日経400</div></div><div class="fl"><svg width="25.5" height="26" viewBox="0 0 25.5 26" style="position:absolute;left:0;top:0"><circle cx="12.8" cy="13" r="11.8" fill="#7e7e7e"/><circle cx="12.8" cy="13" r="5.7" fill="#8a4a40"/></svg><div class="dt">01/28</div></div><div class="mc"><svg width="75.5" height="37.3" viewBox="0 0 75.5 37.3"><defs><linearGradient id="gr3" x1="0" y1="0" x2="0" y2="1"><stop offset="0" stop-color="#f9d4d4"/><stop offset="1" stop-color="#f0a0a0"/></linearGradient><linearGradient id="gg3" x1="0" y1="0" x2="0" y2="1"><stop offset="0" stop-color="#9ad08c"/><stop offset="1" stop-color="#cfeac6"/></linearGradient></defs><rect width="75.5" height="37.3" fill="#e9e9eb"/><rect width="75.5" height="7.4" fill="#e2e2f2"/><path d="M0 9.5H75.5" stroke="#dddde0" stroke-width=".5"/><path d="M0 19H75.5" stroke="#dddde0" stroke-width=".5"/><path d="M0 28.5H75.5" stroke="#dddde0" stroke-width=".5"/><rect x="28.2" y="7.4" width="12.3" height="12.1" fill="#f3d6d6"/><path d="M0.0 21.6 2.4 22.5 5.0 21.5 7.7 22.5 9.7 24.0 11.7 21.0 14.3 20.5 17.0 21.0 19.6 22.0 22.3 23.0 24.9 21.5 28.2 21.0 L28.2 7.4 L0.0 7.4 Z" fill="url(#gr3)"/><path d="M0.0 21.6 2.4 22.5 5.0 21.5 7.7 22.5 9.7 24.0 11.7 21.0 14.3 20.5 17.0 21.0 19.6 22.0 22.3 23.0 24.9 21.5 28.2 21.0" fill="none" stroke="#cc3c3c" stroke-width=".8" stroke-linejoin="round"/><path d="M40.5 16.3 41.5 15.0 43.4 17.5 47.4 18.5 51.4 18.5 55.4 19.0 58.7 19.5 61.3 18.8 64.0 17.0 66.0 16.5 68.3 13.5 70.6 16.5 L70.6 7.4 L40.5 7.4 Z" fill="url(#gr3)"/><path d="M40.5 16.3 41.5 15.0 43.4 17.5 47.4 18.5 51.4 18.5 55.4 19.0 58.7 19.5 61.3 18.8 64.0 17.0 66.0 16.5 68.3 13.5 70.6 16.5" fill="none" stroke="#cc3c3c" stroke-width=".8" stroke-linejoin="round"/><path d="M0 7.4H75.5" stroke="#6c6ad0" stroke-width="1" stroke-dasharray="1.3 1.2"/><g fill="#a8a8a8"><rect x="1" y="33.8" width="4" height="1.5"/><rect x="32" y="33.8" width="3.4" height="1.5"/><rect x="67" y="33.8" width="3.4" height="1.5"/></g></svg></div><div class="lt" style=""><div class="pr">31,910<small>.80</small></div><div class="ch dn">-209<small>.99</small></div><div class="pc dn" style=""><i>▼</i>0.65<small>%</small></div><div class="hl">H:32,023<small>.43</small><br>L:31,753<small>.02</small></div></div></div><div class="row" style="top:119.0px"><div class="nm"><div class="nmt" style="">グロース250</div><div class="sb" style="left:82.5px;width:35.5px;padding-left:8px"><svg width="8" height="8" viewBox="0 0 8 8" style="position:absolute;left:5px;top:3.4px"><rect width="8" height="7" fill="#e8e8e8"/><path d="M2 5.5L5.5 2M3.5 2H5.5V4" stroke="#444" stroke-width="1" fill="none"/></svg><span style="margin-left:8px;font-weight:bold;font-size:11px;letter-spacing:1px">Y!</span></div></div><div class="fl"><svg width="25.5" height="26" viewBox="0 0 25.5 26" style="position:absolute;left:0;top:0"><circle cx="12.8" cy="13" r="11.8" fill="#7e7e7e"/><circle cx="12.8" cy="13" r="5.7" fill="#8a4a40"/></svg><div class="dt">01/28</div></div><div class="mc"><svg width="75.5" height="37.3" viewBox="0 0 75.5 37.3"><defs><linearGradient id="gr4" x1="0" y1="0" x2="0" y2="1"><stop offset="0" stop-color="#f9d4d4"/><stop offset="1" stop-color="#f0a0a0"/></linearGradient><linearGradient id="gg4" x1="0" y1="0" x2="0" y2="1"><stop offset="0" stop-color="#9ad08c"/><stop offset="1" stop-color="#cfeac6"/></linearGradient></defs><rect width="75.5" height="37.3" fill="#e9e9eb"/><rect width="75.5" height="6.9" fill="#e2e2f2"/><path d="M0 9.5H75.5" stroke="#dddde0" stroke-width=".5"/><path d="M0 19H75.5" stroke="#dddde0" stroke-width=".5"/><path d="M0 28.5H75.5" stroke="#dddde0" stroke-width=".5"/><rect x="28.2" y="6.9" width="12.3" height="21.1" fill="#f3d6d6"/><path d="M0.0 19.9 2.4 23.2 5.0 25.8 7.7 27.8 9.7 31.0 11.7 27.8 14.3 25.2 17.0 26.5 19.6 25.8 22.3 27.2 24.9 27.8 28.2 28.5 L28.2 6.9 L0.0 6.9 Z" fill="url(#gr4)"/><path d="M0.0 19.9 2.4 23.2 5.0 25.8 7.7 27.8 9.7 31.0 11.7 27.8 14.3 25.2 17.0 26.5 19.6 25.8 22.3 27.2 24.9 27.8 28.2 28.5" fill="none" stroke="#cc3c3c" stroke-width=".8" stroke-linejoin="round"/><path d="M40.5 25.2 41.5 21.9 43.4 23.8 47.4 25.2 51.4 27.2 55.4 29.1 58.7 31.1 61.3 33.8 64.0 32.5 66.0 29.1 68.6 25.8 70.6 27.2 L70.6 6.9 L40.5 6.9 Z" fill="url(#gr4)"/><path d="M40.5 25.2 41.5 21.9 43.4 23.8 47.4 25.2 51.4 27.2 55.4 29.1 58.7 31.1 61.3 33.8 64.0 32.5 66.0 29.1 68.6 25.8 70.6 27.2" fill="none" stroke="#cc3c3c" stroke-width=".8" stroke-linejoin="round"/><path d="M0 6.9H75.5" stroke="#6c6ad0" stroke-width="1" stroke-dasharray="1.3 1.2"/><g fill="#a8a8a8"><rect x="1" y="33.8" width="4" height="1.5"/><rect x="32" y="33.8" width="3.4" height="1.5"/><rect x="67" y="33.8" width="3.4" height="1.5"/></g></svg></div><div class="lt" style=""><div class="pr">704<small>.52</small></div><div class="ch dn">-12<small>.03</small></div><div class="pc dn" style="background:#f1d6d4"><i>▼</i>1.68<small>%</small></div><div class="hl">H:713<small>.35</small><br>L:702<small>.38</small></div></div></div><div class="row" style="top:158.5px"><div class="nm"><div class="nmt" style="">為替 ドル円</div><div class="sb" style="left:49.5px;width:69px;padding-left:13px">為替</div></div><div class="fl"><svg width="25.5" height="26" viewBox="0 0 25.5 26" style="position:absolute;left:0;top:0"><defs><clipPath id="cl1"><path d="M12.8 1.2A11.8 11.8 0 0 0 12.8 24.8z"/></clipPath></defs><circle cx="12.8" cy="13" r="11.8" fill="#fdfdfd"/><circle cx="16" cy="13" r="5.2" fill="#d4452c"/><g clip-path="url(#cl1)"><rect x="0" y="0" width="12.8" height="26" fill="#f4f4f4"/><path d="M0 3H13M0 7H13M0 11H13M0 15H13M0 19H13M0 23H13" stroke="#d85a50" stroke-width="2"/><rect x="0" y="1" width="12.8" height="12.5" fill="#5a86c8"/><rect x="11.8" y="0" width="1.6" height="26" fill="#3b3b3b"/></g></svg><div class="tm">16:04</div></div><div class="mc"><svg width="75.5" height="37.3" viewBox="0 0 75.5 37.3"><defs><linearGradient id="gr5" x1="0" y1="0" x2="0" y2="1"><stop offset="0" stop-color="#f9d4d4"/><stop offset="1" stop-color="#f0a0a0"/></linearGradient><linearGradient id="gg5" x1="0" y1="0" x2="0" y2="1"><stop offset="0" stop-color="#9ad08c"/><stop offset="1" stop-color="#cfeac6"/></linearGradient></defs><rect width="75.5" height="37.3" fill="#fff"/><path d="M0 9.5H75.5" stroke="#dddde0" stroke-width=".5"/><path d="M0 19H75.5" stroke="#dddde0" stroke-width=".5"/><path d="M0 28.5H75.5" stroke="#dddde0" stroke-width=".5"/><path d="M0.0 3.4 3.0 2.7 7.0 1.7 10.0 3.2 11.0 4.2" fill="none" stroke="#2f7a2f" stroke-width=".8" stroke-linejoin="round"/><path d="M11.0 4.2 11.6 7.8 14.0 9.3 17.0 9.8 20.0 11.8 23.0 12.8 27.0 14.3 31.0 13.8 34.0 14.8 37.0 16.4 41.0 16.9 44.0 18.9 47.5 20.4 50.5 20.6 53.5 18.9 56.5 17.9 59.6 16.4 62.6 15.4 65.6 16.4 68.7 16.9 71.7 17.9 75.5 17.9 L75.5 4.0 L11.0 4.0 Z" fill="url(#gr5)"/><path d="M11.0 4.2 11.6 7.8 14.0 9.3 17.0 9.8 20.0 11.8 23.0 12.8 27.0 14.3 31.0 13.8 34.0 14.8 37.0 16.4 41.0 16.9 44.0 18.9 47.5 20.4 50.5 20.6 53.5 18.9 56.5 17.9 59.6 16.4 62.6 15.4 65.6 16.4 68.7 16.9 71.7 17.9 75.5 17.9" fill="none" stroke="#cc3c3c" stroke-width=".8" stroke-linejoin="round"/><g fill="#a8a8a8"><rect x="1" y="33.8" width="4" height="1.5"/><rect x="32" y="33.8" width="3.4" height="1.5"/><rect x="67" y="33.8" width="3.4" height="1.5"/></g></svg></div><div class="lt" style=""><div class="glow"></div><div class="pr lv">152.57<small><span style="font-size:18px">&thinsp;1</span></small></div><div class="ch up">+0.35<small><span style="font-size:14px">1</span></small></div><div class="pc up" style=""><i>▲</i>0.23<small>%</small></div><div class="hl">H:153.06<small><span style="font-size:8.5px">9</span></small><br>L:152.13<small><span style="font-size:8.5px">2</span></small></div></div></div><div class="row" style="top:198.0px"><div class="nm"><div class="nmt" style="">為替 ユーロ円</div><div class="sb" style="left:49.5px;width:69px;padding-left:13px">為替</div></div><div class="fl"><svg width="25.5" height="26" viewBox="0 0 25.5 26" style="position:absolute;left:0;top:0"><defs><clipPath id="cl2"><path d="M12.8 1.2A11.8 11.8 0 0 0 12.8 24.8z"/></clipPath></defs><circle cx="12.8" cy="13" r="11.8" fill="#fdfdfd"/><circle cx="16" cy="13" r="5.2" fill="#d4452c"/><g clip-path="url(#cl2)"><rect x="0" y="0" width="12.8" height="26" fill="#f4f4f4"/><path d="M0 3H13M0 7H13M0 11H13M0 15H13M0 19H13M0 23H13" stroke="#d85a50" stroke-width="2"/><rect x="0" y="1" width="12.8" height="12.5" fill="#5a86c8"/><rect x="11.8" y="0" width="1.6" height="26" fill="#3b3b3b"/></g></svg><div class="tm">16:04</div></div><div class="mc"><svg width="75.5" height="37.3" viewBox="0 0 75.5 37.3"><defs><linearGradient id="gr6" x1="0" y1="0" x2="0" y2="1"><stop offset="0" stop-color="#f9d4d4"/><stop offset="1" stop-color="#f0a0a0"/></linearGradient><linearGradient id="gg6" x1="0" y1="0" x2="0" y2="1"><stop offset="0" stop-color="#9ad08c"/><stop offset="1" stop-color="#cfeac6"/></linearGradient></defs><rect width="75.5" height="37.3" fill="#fff"/><path d="M0 9.5H75.5" stroke="#dddde0" stroke-width=".5"/><path d="M0 19H75.5" stroke="#dddde0" stroke-width=".5"/><path d="M0 28.5H75.5" stroke="#dddde0" stroke-width=".5"/><path d="M0.0 24.2 3.0 22.7 7.0 23.2 9.0 24.2" fill="none" stroke="#2f7a2f" stroke-width=".8" stroke-linejoin="round"/><path d="M9.0 24.2 9.6 30.3 12.0 30.8 15.0 31.6 18.0 30.3 21.0 30.6 24.0 29.8 27.0 26.8 31.0 25.3 34.0 28.3 37.0 28.8 41.0 28.6 43.0 27.8 44.4 24.7 47.5 25.3 49.5 24.7 52.5 24.5 55.6 25.3 58.6 23.7 61.6 24.2 64.6 25.8 67.7 26.8 69.7 29.3 71.7 28.3 75.5 27.3 L75.5 23.2 L9.0 23.2 Z" fill="#f8dada"/><path d="M9.0 24.2 9.6 30.3 12.0 30.8 15.0 31.6 18.0 30.3 21.0 30.6 24.0 29.8 27.0 26.8 31.0 25.3 34.0 28.3 37.0 28.8 41.0 28.6 43.0 27.8 44.4 24.7 47.5 25.3 49.5 24.7 52.5 24.5 55.6 25.3 58.6 23.7 61.6 24.2 64.6 25.8 67.7 26.8 69.7 29.3 71.7 28.3 75.5 27.3" fill="none" stroke="#cc3c3c" stroke-width=".8" stroke-linejoin="round"/><g fill="#a8a8a8"><rect x="1" y="33.8" width="4" height="1.5"/><rect x="32" y="33.8" width="3.4" height="1.5"/><rect x="67" y="33.8" width="3.4" height="1.5"/></g></svg></div><div class="lt" style=""><div class="glow"></div><div class="pr lv">183.07<small><span style="font-size:18px">&thinsp;5</span></small></div><div class="ch dn">-0.25<small><span style="font-size:14px">3</span></small></div><div class="pc dn" style=""><i>▼</i>0.14<small>%</small></div><div class="hl">H:183.56<small><span style="font-size:8.5px">8</span></small><br>L:182.75<small><span style="font-size:8.5px">7</span></small></div></div></div><div class="row" style="top:237.5px"><div class="nm"><div class="nmt" style="font-size:13.6px"><span style="display:inline-block;background:#fff;color:#222;font-size:10px;line-height:12px;height:12px;padding:0 1.5px;border-radius:2px;font-weight:normal;text-shadow:none;vertical-align:2px;margin-right:2px;letter-spacing:0.2px">CFD</span>日経平均</div><svg width="17" height="17" viewBox="0 0 17 17" style="position:absolute;left:101px;top:3px"><circle cx="8.5" cy="8.5" r="8.3" fill="#4aa8ec"/><path d="M4.4 4.2L11.2 12.8M12.6 4.2L4.6 12.8" stroke="#eaf4fc" stroke-width=".9" fill="none"/><path d="M5.8 4.2L12.6 12.8" stroke="#eaf4fc" stroke-width=".9" fill="none"/></svg></div><div class="fl"><svg width="25.5" height="26" viewBox="0 0 25.5 26" style="position:absolute;left:0;top:0"><circle cx="12.8" cy="13" r="11.8" fill="#fdfdfd"/><circle cx="12.8" cy="13" r="5.7" fill="#d4452c"/></svg><div class="tm">16:04</div></div><div class="mc"><svg width="75.5" height="37.3" viewBox="0 0 75.5 37.3"><defs><linearGradient id="gr7" x1="0" y1="0" x2="0" y2="1"><stop offset="0" stop-color="#f9d4d4"/><stop offset="1" stop-color="#f0a0a0"/></linearGradient><linearGradient id="gg7" x1="0" y1="0" x2="0" y2="1"><stop offset="0" stop-color="#9ad08c"/><stop offset="1" stop-color="#cfeac6"/></linearGradient></defs><rect width="75.5" height="37.3" fill="#fff"/><rect x="55.6" y="0" width="20" height="37.3" fill="#f6ea8c"/><path d="M0 9.5H75.5" stroke="#dddde0" stroke-width=".5"/><path d="M0 19H75.5" stroke="#dddde0" stroke-width=".5"/><path d="M0 28.5H75.5" stroke="#dddde0" stroke-width=".5"/><path d="M0.0 6.9 3.0 8.4 6.0 11.9 9.0 9.4 11.6 17.5 14.0 16.5 17.0 19.0 20.0 23.0 23.0 24.5 26.0 25.0 28.0 20.0 30.0 16.0 33.0 16.5 36.0 22.0 38.0 19.5 41.0 17.5 44.0 18.0 46.5 26.6 47.5 28.0 49.5 26.0 51.5 25.0 53.5 21.0 55.6 19.0 57.6 23.0 59.6 15.0 61.6 18.0 64.0 16.0 66.7 14.0 67.7 18.0 69.7 16.0 71.7 15.0 73.7 11.0 75.5 5.9 L75.5 6.4 L0.0 6.4 Z" fill="#f8dada"/><path d="M0.0 6.9 3.0 8.4 6.0 11.9 9.0 9.4 11.6 17.5 14.0 16.5 17.0 19.0 20.0 23.0 23.0 24.5 26.0 25.0 28.0 20.0 30.0 16.0 33.0 16.5 36.0 22.0 38.0 19.5 41.0 17.5 44.0 18.0 46.5 26.6 47.5 28.0 49.5 26.0 51.5 25.0 53.5 21.0 55.6 19.0 57.6 23.0 59.6 15.0 61.6 18.0 64.0 16.0 66.7 14.0 67.7 18.0 69.7 16.0 71.7 15.0 73.7 11.0 75.5 5.9" fill="none" stroke="#cc3c3c" stroke-width=".8" stroke-linejoin="round"/><path d="M0 6.4H75.5" stroke="#6c6ad0" stroke-width="1" stroke-dasharray="1.3 1.2"/><g fill="#a8a8a8"><rect x="1" y="33.8" width="4" height="1.5"/><rect x="32" y="33.8" width="3.4" height="1.5"/><rect x="67" y="33.8" width="3.4" height="1.5"/></g></svg></div><div class="lt cfd" style=""><div class="pr lv" style="right:226.5px;font-size:22.8px">53,659<small>.40</small></div><div style="position:absolute;left:103px;top:4.3px;width:166.5px;height:29.6px;background:#fdfdfb;border:1px solid #deded8;box-sizing:border-box"></div><div style="position:absolute;left:106px;top:12px;font-size:11px;color:#8a8a8a;font-weight:bold;letter-spacing:-0.5px">日経比:</div><div class="pc up" style="left:144.5px;width:61.5px;top:7.5px;height:23.5px;font-size:18.2px;line-height:24px;padding-right:4.5px">+300</div><div class="pc up" style="left:211.5px;width:54px;top:7.5px;height:23.5px;font-size:16.6px;line-height:24.5px;padding-right:2px"><i style="font-size:12.5px">▲</i>0.56<small>%</small></div><div class="hl" style="font-size:11.5px;color:#8a8a8a">H:53,799<small></small><br>L:53,317<small></small></div></div></div></div><div class="pn" style="top:901.2px;height:238.4px"><div class="row" style="top:0.5px"><div class="nm"><div class="nmt" style="font-size:11.6px;letter-spacing:-0.3px">日本国債10年利回り</div><div class="sb" style="left:49.5px;width:69px;padding-left:13px">国債 債券</div></div><div class="fl"><svg width="25.5" height="26" viewBox="0 0 25.5 26" style="position:absolute;left:0;top:0"><circle cx="12.8" cy="13" r="11.8" fill="#fdfdfd"/><circle cx="12.8" cy="13" r="5.7" fill="#d4452c"/></svg><div class="tm">16:03</div></div><div class="mc"><svg width="75.5" height="37.3" viewBox="0 0 75.5 37.3"><defs><linearGradient id="gr8" x1="0" y1="0" x2="0" y2="1"><stop offset="0" stop-color="#f9d4d4"/><stop offset="1" stop-color="#f0a0a0"/></linearGradient><linearGradient id="gg8" x1="0" y1="0" x2="0" y2="1"><stop offset="0" stop-color="#9ad08c"/><stop offset="1" stop-color="#cfeac6"/></linearGradient></defs><rect width="75.5" height="37.3" fill="#fff"/><path d="M0 9.5H75.5" stroke="#dddde0" stroke-width=".5"/><path d="M0 19H75.5" stroke="#dddde0" stroke-width=".5"/><path d="M0 28.5H75.5" stroke="#dddde0" stroke-width=".5"/><path d="M0.0 3.7 5.0 3.2 9.0 4.7 12.0 3.7 17.0 4.2 22.0 5.8 24.0 4.0 32.0 4.0 42.0 4.0 46.5 4.2 48.0 6.3 L48.0 6.3 L0.0 6.3 Z" fill="#dff2d8"/><path d="M0.0 3.7 5.0 3.2 9.0 4.7 12.0 3.7 17.0 4.2 22.0 5.8 24.0 4.0 32.0 4.0 42.0 4.0 46.5 4.2 48.0 6.3" fill="none" stroke="#2f7a2f" stroke-width=".8" stroke-linejoin="round"/><path d="M48.0 6.3 49.0 9.8 50.5 9.3 52.0 11.8 53.5 10.3 56.6 12.8 59.6 14.3 62.6 17.4 65.7 16.9 67.7 17.9 69.7 15.9 71.2 20.4 72.2 23.4 73.7 23.9 75.5 22.9 L75.5 6.3 L48.0 6.3 Z" fill="url(#gr8)"/><path d="M48.0 6.3 49.0 9.8 50.5 9.3 52.0 11.8 53.5 10.3 56.6 12.8 59.6 14.3 62.6 17.4 65.7 16.9 67.7 17.9 69.7 15.9 71.2 20.4 72.2 23.4 73.7 23.9 75.5 22.9" fill="none" stroke="#cc3c3c" stroke-width=".8" stroke-linejoin="round"/><g fill="#a8a8a8"><rect x="1" y="33.8" width="4" height="1.5"/><rect x="32" y="33.8" width="3.4" height="1.5"/><rect x="67" y="33.8" width="3.4" height="1.5"/></g></svg></div><div class="lt" style=""><div class="pr lv">2.236<small></small></div><div class="ch dn">-0.048<small></small></div><div class="pc dn" style="background:#f2cfcd"><i>▼</i>2.10<small>%</small></div><div class="hl">H:2.288<small></small><br>L:2.231<small></small></div></div></div><div class="row" style="top:40.15px"><div class="nm"><div class="nmt" style="">長期国債先物 <span style="font-size:10px">大取</span></div></div><div class="fl"><svg width="25.5" height="26" viewBox="0 0 25.5 26" style="position:absolute;left:0;top:0"><circle cx="12.8" cy="13" r="11.8" fill="#fdfdfd"/><circle cx="12.8" cy="13" r="5.7" fill="#d4452c"/></svg><div class="tm">15:48</div></div><div class="mc"><svg width="75.5" height="37.3" viewBox="0 0 75.5 37.3"><defs><linearGradient id="gr9" x1="0" y1="0" x2="0" y2="1"><stop offset="0" stop-color="#f9d4d4"/><stop offset="1" stop-color="#f0a0a0"/></linearGradient><linearGradient id="gg9" x1="0" y1="0" x2="0" y2="1"><stop offset="0" stop-color="#9ad08c"/><stop offset="1" stop-color="#cfeac6"/></linearGradient></defs><rect width="75.5" height="37.3" fill="#fff"/><path d="M0 9.5H75.5" stroke="#dddde0" stroke-width=".5"/><path d="M0 19H75.5" stroke="#dddde0" stroke-width=".5"/><path d="M0 28.5H75.5" stroke="#dddde0" stroke-width=".5"/><path d="M0.0 28.3 3.0 28.5 6.0 26.3 9.0 26.8 12.0 26.0 15.0 27.3 18.0 26.8 21.0 28.3 24.0 28.8 26.0 26.3 29.0 24.0 32.0 25.8 35.0 26.3 38.0 26.8 41.0 26.3 44.0 26.5 46.5 25.3 49.5 26.3 52.5 26.8 55.6 27.3 57.6 23.2 59.6 19.7 62.6 18.7 65.7 17.2 67.7 14.1 70.7 15.2 73.7 14.1 75.5 9.6 L75.5 28.6 L0.0 28.6 Z" fill="#dff2d8"/><path d="M0.0 28.3 3.0 28.5 6.0 26.3 9.0 26.8 12.0 26.0 15.0 27.3 18.0 26.8 21.0 28.3 24.0 28.8 26.0 26.3 29.0 24.0 32.0 25.8 35.0 26.3 38.0 26.8 41.0 26.3 44.0 26.5 46.5 25.3 49.5 26.3 52.5 26.8 55.6 27.3 57.6 23.2 59.6 19.7 62.6 18.7 65.7 17.2 67.7 14.1 70.7 15.2 73.7 14.1 75.5 9.6" fill="none" stroke="#2f7a2f" stroke-width=".8" stroke-linejoin="round"/><g fill="#a8a8a8"><rect x="1" y="33.8" width="4" height="1.5"/><rect x="32" y="33.8" width="3.4" height="1.5"/><rect x="67" y="33.8" width="3.4" height="1.5"/></g></svg></div><div class="lt" style=""><div class="pr lv">131.72<small></small></div><div class="ch fl0">0.00<small></small></div><div class="pc fl0" style="padding-right:9.5px"><i></i>0.00<small>%</small></div><div class="hl">H:131.77<small></small><br>L:131.70<small></small></div></div></div><div class="row" style="top:79.8px"><div class="nm"><div class="nmt" style="">日経VI</div><div class="sb" style="left:49.5px;width:69px;padding-left:13px">恐怖指数</div></div><div class="fl"><svg width="25.5" height="26" viewBox="0 0 25.5 26" style="position:absolute;left:0;top:0"><circle cx="12.8" cy="13" r="11.8" fill="#6c6c6c"/><path d="M3 12C6 5 12 3 16 5" stroke="#8a8a8a" stroke-width="1.6" fill="none"/><path d="M8 24C8 16 10 11 14 9C18 8 20 11 19 15L22 24z" fill="#8e8e8e"/><circle cx="15.5" cy="11.5" r="3.2" fill="#555"/><circle cx="14.5" cy="11" r=".8" fill="#aaa"/><circle cx="16.8" cy="11" r=".8" fill="#aaa"/></svg><div class="dt">01/28</div></div><div class="mc"><svg width="75.5" height="37.3" viewBox="0 0 75.5 37.3"><defs><linearGradient id="gr10" x1="0" y1="0" x2="0" y2="1"><stop offset="0" stop-color="#f9d4d4"/><stop offset="1" stop-color="#f0a0a0"/></linearGradient><linearGradient id="gg10" x1="0" y1="0" x2="0" y2="1"><stop offset="0" stop-color="#9ad08c"/><stop offset="1" stop-color="#cfeac6"/></linearGradient></defs><rect width="75.5" height="37.3" fill="#e4e4e6"/><path d="M0 9.5H75.5" stroke="#dddde0" stroke-width=".5"/><path d="M0 19H75.5" stroke="#dddde0" stroke-width=".5"/><path d="M0 28.5H75.5" stroke="#dddde0" stroke-width=".5"/><path d="M0.0 13.9 1.5 8.4 2.5 13.9 4.0 8.4 5.0 15.5 6.6 9.9 8.0 11.9 9.6 8.4 11.0 12.9 12.6 14.4 14.0 11.9 17.0 8.4 20.0 6.4 23.0 8.4 25.0 4.3 27.0 7.4 30.0 7.4 33.0 8.9 36.0 9.4 38.0 8.4 40.0 11.9 42.0 8.4 45.0 6.9 48.5 5.4 51.5 3.8 54.5 3.0 57.6 4.8 60.6 4.0 63.6 4.3 66.7 4.0 68.2 4.8 L68.2 15.5 L0.0 15.5 Z" fill="url(#gg10)"/><path d="M0.0 13.9 1.5 8.4 2.5 13.9 4.0 8.4 5.0 15.5 6.6 9.9 8.0 11.9 9.6 8.4 11.0 12.9 12.6 14.4 14.0 11.9 17.0 8.4 20.0 6.4 23.0 8.4 25.0 4.3 27.0 7.4 30.0 7.4 33.0 8.9 36.0 9.4 38.0 8.4 40.0 11.9 42.0 8.4 45.0 6.9 48.5 5.4 51.5 3.8 54.5 3.0 57.6 4.8 60.6 4.0 63.6 4.3 66.7 4.0 68.2 4.8" fill="none" stroke="#2f7a2f" stroke-width=".8" stroke-linejoin="round"/><path d="M0 15.5H75.5" stroke="#6c6ad0" stroke-width="1" stroke-dasharray="1.3 1.2"/><g fill="#a8a8a8"><rect x="1" y="33.8" width="4" height="1.5"/><rect x="32" y="33.8" width="3.4" height="1.5"/><rect x="67" y="33.8" width="3.4" height="1.5"/></g></svg></div><div class="lt" style=""><div class="pr">34.33<small></small></div><div class="ch up">+0.19<small></small></div><div class="pc up" style="font-size:16px;padding-right:9px"><i>▲</i>0.56<small>%</small></div><div class="hl">H:35.06<small></small><br>L:33.27<small></small></div></div></div><div class="row" style="top:119.44999999999999px"><div class="nm"><div class="nmt" style="letter-spacing:0.4px">NT倍率</div><div class="sb" style="left:49.5px;width:69px;padding-left:13px">NT倍率</div></div><div class="fl"><svg width="25.5" height="26" viewBox="0 0 25.5 26" style="position:absolute;left:0;top:0"><circle cx="12.8" cy="13" r="11.8" fill="#7e7e7e"/><circle cx="12.8" cy="13" r="5.7" fill="#8a4a40"/></svg><div class="dt">01/28</div></div><div class="mc"><svg width="75.5" height="37.3" viewBox="0 0 75.5 37.3"><defs><linearGradient id="gr11" x1="0" y1="0" x2="0" y2="1"><stop offset="0" stop-color="#f9d4d4"/><stop offset="1" stop-color="#f0a0a0"/></linearGradient><linearGradient id="gg11" x1="0" y1="0" x2="0" y2="1"><stop offset="0" stop-color="#9ad08c"/><stop offset="1" stop-color="#cfeac6"/></linearGradient></defs><rect width="75.5" height="37.3" fill="#e9e9eb"/><path d="M0 9.5H75.5" stroke="#dddde0" stroke-width=".5"/><path d="M0 19H75.5" stroke="#dddde0" stroke-width=".5"/><path d="M0 28.5H75.5" stroke="#dddde0" stroke-width=".5"/><rect x="28.8" y="23" width="11.599999999999998" height="6.300000000000001" fill="#e4f0e0"/><path d="M0.0 26.0 2.0 25.0 3.5 27.5 6.0 26.0 9.0 24.4 12.0 22.9 14.6 21.4 16.7 20.4 18.7 21.9 20.7 22.4 23.2 18.9 25.3 19.9 27.3 21.4 28.8 22.4 L28.8 29.3 L0.0 29.3 Z" fill="#dff2d8"/><path d="M0.0 26.0 2.0 25.0 3.5 27.5 6.0 26.0 9.0 24.4 12.0 22.9 14.6 21.4 16.7 20.4 18.7 21.9 20.7 22.4 23.2 18.9 25.3 19.9 27.3 21.4 28.8 22.4" fill="none" stroke="#2f7a2f" stroke-width=".8" stroke-linejoin="round"/><path d="M40.4 21.9 42.0 23.9 44.0 24.9 45.5 26.5 47.5 24.9 49.5 23.9 52.0 23.2 54.5 23.6 57.6 23.4 60.6 22.9 63.6 23.2 66.7 22.9 68.7 23.9 69.5 15.9 71.2 17.4 L71.2 29.3 L40.4 29.3 Z" fill="#dff2d8"/><path d="M40.4 21.9 42.0 23.9 44.0 24.9 45.5 26.5 47.5 24.9 49.5 23.9 52.0 23.2 54.5 23.6 57.6 23.4 60.6 22.9 63.6 23.2 66.7 22.9 68.7 23.9 69.5 15.9 71.2 17.4" fill="none" stroke="#2f7a2f" stroke-width=".8" stroke-linejoin="round"/><path d="M0 29.3H75.5" stroke="#6c6ad0" stroke-width="1" stroke-dasharray="1.3 1.2"/><g fill="#a8a8a8"><rect x="1" y="33.8" width="4" height="1.5"/><rect x="32" y="33.8" width="3.4" height="1.5"/><rect x="67" y="33.8" width="3.4" height="1.5"/></g></svg></div><div class="lt" style=""><div class="pr">15.09<small></small></div><div class="ch up">+0.12<small></small></div><div class="pc up" style=""><i>▲</i>0.80<small>%</small></div><div class="hl">H:15.09<small></small><br>L:14.98<small></small></div></div></div><div class="row" style="top:159.1px"><div class="nm"><div class="nmt" style="letter-spacing:-0.6px;font-size:14.2px">ドル建て日経平均</div><div class="sb" style="left:49.5px;width:69px;padding-left:13px">日経ドル</div></div><div class="fl"><svg width="25.5" height="26" viewBox="0 0 25.5 26" style="position:absolute;left:0;top:0"><circle cx="12.8" cy="13" r="11.8" fill="#7e7e7e"/><circle cx="12.8" cy="13" r="5.7" fill="#8a4a40"/></svg><div class="dt">01/28</div></div><div class="mc"><svg width="75.5" height="37.3" viewBox="0 0 75.5 37.3"><defs><linearGradient id="gr12" x1="0" y1="0" x2="0" y2="1"><stop offset="0" stop-color="#f9d4d4"/><stop offset="1" stop-color="#f0a0a0"/></linearGradient><linearGradient id="gg12" x1="0" y1="0" x2="0" y2="1"><stop offset="0" stop-color="#9ad08c"/><stop offset="1" stop-color="#cfeac6"/></linearGradient></defs><rect width="75.5" height="37.3" fill="#e9e9eb"/><path d="M0 9.5H75.5" stroke="#dddde0" stroke-width=".5"/><path d="M0 19H75.5" stroke="#dddde0" stroke-width=".5"/><path d="M0 28.5H75.5" stroke="#dddde0" stroke-width=".5"/><rect x="28.8" y="28" width="11.599999999999998" height="8.399999999999999" fill="#e4f0e0"/><path d="M0.0 29.8 2.0 30.3 3.5 29.3 6.0 31.3 9.0 32.3 12.0 29.3 14.6 28.3 16.7 27.3 18.7 29.3 20.7 32.6 23.2 29.3 25.3 30.3 27.3 29.8 28.8 27.8 L28.8 36.4 L0.0 36.4 Z" fill="#dff2d8"/><path d="M0.0 29.8 2.0 30.3 3.5 29.3 6.0 31.3 9.0 32.3 12.0 29.3 14.6 28.3 16.7 27.3 18.7 29.3 20.7 32.6 23.2 29.3 25.3 30.3 27.3 29.8 28.8 27.8" fill="none" stroke="#2f7a2f" stroke-width=".8" stroke-linejoin="round"/><path d="M40.4 25.8 42.4 27.3 45.0 29.8 47.0 28.8 49.0 28.3 51.0 27.3 53.5 28.3 56.6 28.3 59.6 27.3 62.6 26.3 65.7 24.9 68.2 26.3 69.5 18.2 71.2 21.7 L71.2 36.4 L40.4 36.4 Z" fill="#dff2d8"/><path d="M40.4 25.8 42.4 27.3 45.0 29.8 47.0 28.8 49.0 28.3 51.0 27.3 53.5 28.3 56.6 28.3 59.6 27.3 62.6 26.3 65.7 24.9 68.2 26.3 69.5 18.2 71.2 21.7" fill="none" stroke="#2f7a2f" stroke-width=".8" stroke-linejoin="round"/><path d="M0 36.4H75.5" stroke="#6c6ad0" stroke-width="1" stroke-dasharray="1.3 1.2"/><g fill="#a8a8a8"><rect x="1" y="33.8" width="4" height="1.5"/><rect x="32" y="33.8" width="3.4" height="1.5"/><rect x="67" y="33.8" width="3.4" height="1.5"/></g></svg></div><div class="lt" style=""><div class="pr">349.64<small></small></div><div class="ch dn">-0.08<small></small></div><div class="pc dn" style=""><i>▼</i>0.02<small>%</small></div><div class="hl">H:349.99<small></small><br>L:345.96<small></small></div></div></div><div class="row" style="top:198.75px"><div class="nm"><div class="nmt" style="">東証REIT</div></div><div class="fl"><svg width="25.5" height="26" viewBox="0 0 25.5 26" style="position:absolute;left:0;top:0"><circle cx="12.8" cy="13" r="11.8" fill="#7e7e7e"/><circle cx="12.8" cy="13" r="5.7" fill="#8a4a40"/></svg><div class="dt">01/28</div></div><div class="mc"><svg width="75.5" height="37.3" viewBox="0 0 75.5 37.3"><defs><linearGradient id="gr13" x1="0" y1="0" x2="0" y2="1"><stop offset="0" stop-color="#f9d4d4"/><stop offset="1" stop-color="#f0a0a0"/></linearGradient><linearGradient id="gg13" x1="0" y1="0" x2="0" y2="1"><stop offset="0" stop-color="#9ad08c"/><stop offset="1" stop-color="#cfeac6"/></linearGradient></defs><rect width="75.5" height="37.3" fill="#e9e9eb"/><path d="M0 9.5H75.5" stroke="#dddde0" stroke-width=".5"/><path d="M0 19H75.5" stroke="#dddde0" stroke-width=".5"/><path d="M0 28.5H75.5" stroke="#dddde0" stroke-width=".5"/><path d="M0.0 25.0 1.5 27.0 3.0 24.0 4.5 20.0 5.6 17.5 7.0 20.0 9.0 23.5 11.0 23.0 13.0 24.0 15.0 22.5 17.0 23.0 19.7 21.5 22.0 22.0 24.0 21.0 26.8 19.5 28.3 20.0 L28.3 20.0 L0.0 20.0 Z" fill="#f8dada"/><path d="M0.0 25.0 1.5 27.0 3.0 24.0 4.5 20.0 5.6 17.5 7.0 20.0 9.0 23.5 11.0 23.0 13.0 24.0 15.0 22.5 17.0 23.0 19.7 21.5 22.0 22.0 24.0 21.0 26.8 19.5 28.3 20.0" fill="none" stroke="#cc3c3c" stroke-width=".8" stroke-linejoin="round"/><path d="M40.4 22.5 42.4 21.0 44.4 23.0 46.5 22.5 49.0 23.0 51.0 21.0 53.5 22.0 56.6 22.5 59.6 23.5 62.6 24.0 65.0 23.0 67.0 21.0 69.0 22.0 71.2 22.5 L71.2 20.0 L40.4 20.0 Z" fill="#f8dada"/><path d="M40.4 22.5 42.4 21.0 44.4 23.0 46.5 22.5 49.0 23.0 51.0 21.0 53.5 22.0 56.6 22.5 59.6 23.5 62.6 24.0 65.0 23.0 67.0 21.0 69.0 22.0 71.2 22.5" fill="none" stroke="#cc3c3c" stroke-width=".8" stroke-linejoin="round"/><path d="M0 20H75.5" stroke="#6c6ad0" stroke-width="1" stroke-dasharray="1.3 1.2"/><g fill="#a8a8a8"><rect x="1" y="33.8" width="4" height="1.5"/><rect x="32" y="33.8" width="3.4" height="1.5"/><rect x="67" y="33.8" width="3.4" height="1.5"/></g></svg></div><div class="lt" style="height:41px;border-bottom:1.2px solid #f6f6f1;box-shadow:inset 0 -1.3px 0 #a2a29e"><div class="pr">1,984<small>.83</small></div><div class="ch up">+5<small>.86</small></div><div class="pc up" style=""><i>▲</i>0.30<small>%</small></div><div class="hl">H:1,984<small>.83</small><br>L:1,970<small>.05</small></div></div></div></div>
</div></body></html>
